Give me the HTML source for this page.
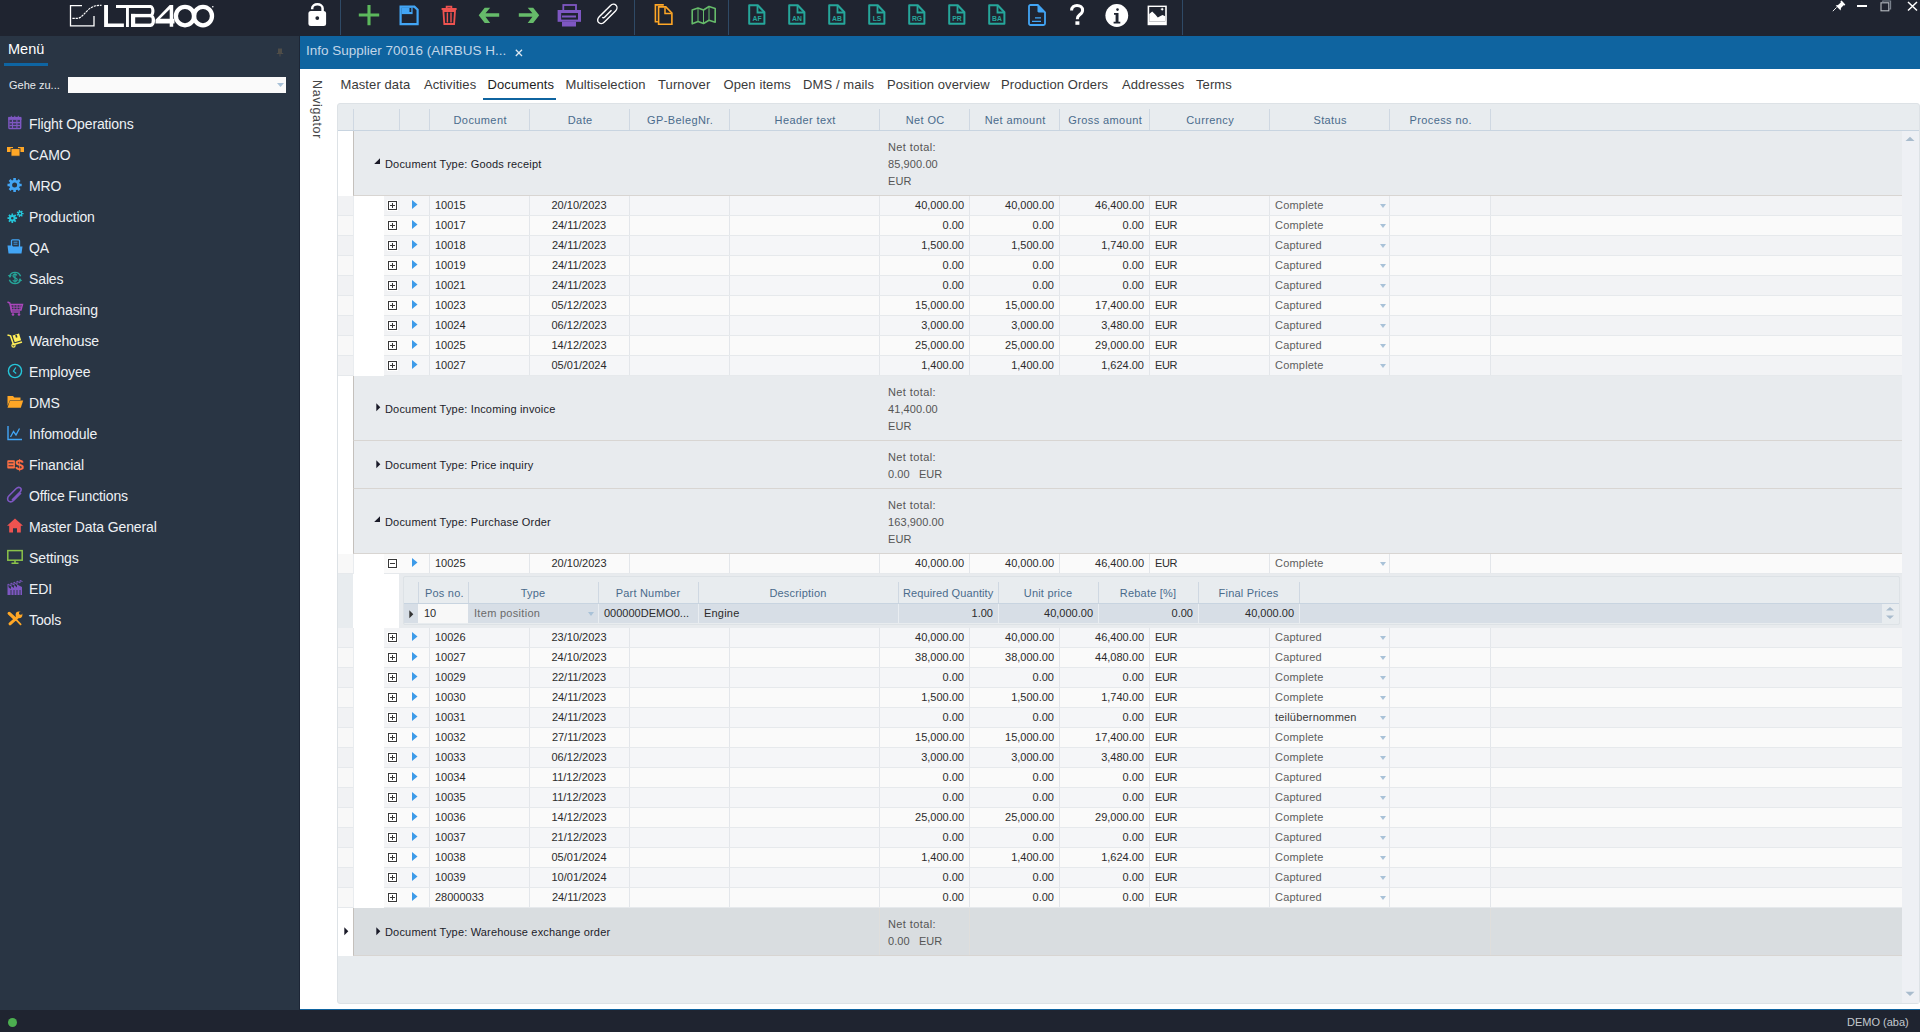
<!DOCTYPE html><html><head><meta charset="utf-8"><style>
*{box-sizing:border-box;margin:0;padding:0}
html,body{width:1920px;height:1032px;overflow:hidden;background:#fff;font-family:"Liberation Sans", sans-serif}
.a{position:absolute}
.t{position:absolute;white-space:nowrap;line-height:1}
svg{position:absolute;overflow:visible}
</style></head><body><div class="a" style="left:0;top:0;width:1920px;height:36px;background:#1f2430"></div>
<svg style="left:60px;top:0px" width="170" height="36" viewBox="0 0 170 36">
<path d="M22 5.6H10.5V25.9H34V16" fill="none" stroke="#fff" stroke-width="1.3"/>
<path d="M12.4 18.4H17C21 18.4 24 14 28 10C32 6.2 36 5.3 41.6 5.3" fill="none" stroke="#fff" stroke-width="1.1" stroke-dasharray="2.4 0.8"/>
<path d="M44.1 5H48V23.6H63.9V27H44.1Z" fill="#fff"/>
<path d="M56 5H91V8.1H68.9V27H66V8.1H56Z" fill="#fff"/><rect x="71" y="13.9" width="4.2" height="13.1" fill="#fff"/><rect x="71" y="13.9" width="20" height="3.4" fill="#fff"/><rect x="71" y="23.6" width="20" height="3.4" fill="#fff"/><path d="M90.5 6.55A2.4 4.5 0 0 1 90.5 15.6" fill="none" stroke="#fff" stroke-width="3.1"/><path d="M90.5 15.6A2.9 4.85 0 0 1 90.5 25.3" fill="none" stroke="#fff" stroke-width="3.4"/>
<path d="M109.7 4.9H113.2V18.8H114.5V23.5H113.2V26.8H109.7V23.5H95.5V19.8ZM109.7 9.2L100 18.8H109.7Z" fill="#fff" fill-rule="evenodd"/>
<ellipse cx="125" cy="16.1" rx="9.1" ry="9.2" fill="none" stroke="#fff" stroke-width="4.3"/>
<ellipse cx="143" cy="16.1" rx="9" ry="9.2" fill="none" stroke="#fff" stroke-width="4.3"/>
<circle cx="152.8" cy="6.7" r="0.8" fill="#fff"/>
</svg>
<div class="a" style="left:340px;top:0;width:1px;height:35px;background:#2f4a66"></div>
<div class="a" style="left:634px;top:0;width:1px;height:35px;background:#2f4a66"></div>
<div class="a" style="left:728px;top:0;width:1px;height:35px;background:#2f4a66"></div>
<div class="a" style="left:1182px;top:0;width:1px;height:35px;background:#2f4a66"></div>
<svg style="left:306px;top:0px" width="22" height="28" viewBox="0 0 22 28"><path d="M6.2 9.2V8.3A5.2 4.1 0 0 1 16.6 8.3V12" fill="none" stroke="#fff" stroke-width="2.5"/><rect x="2.4" y="11" width="17.7" height="15" rx="2.5" fill="#fff"/><circle cx="11.3" cy="18.1" r="1.9" fill="#1f2430"/></svg>
<svg style="left:358px;top:4px" width="22" height="22" viewBox="0 0 22 22"><path d="M11 1V21.2M0.8 11H21.2" stroke="#5cb85c" stroke-width="3.1"/></svg>
<svg style="left:399px;top:5px" width="21" height="21" viewBox="0 0 21 21"><path d="M1.6 1.6H15.4L18.6 4.8V19.2H1.6Z" fill="none" stroke="#42a5f5" stroke-width="2.2"/><rect x="2.6" y="2.5" width="11" height="6.6" fill="#42a5f5"/><rect x="10.5" y="3" width="1.8" height="4" fill="#1f2430"/></svg>
<svg style="left:440px;top:4px" width="18" height="22" viewBox="0 0 18 22"><path d="M1.6 5H16.6" stroke="#ef5350" stroke-width="2"/><path d="M6.6 4.5V2.6H11.4V4.5" fill="none" stroke="#ef5350" stroke-width="1.7"/><path d="M3.4 7H15L14.1 20H4.3Z" fill="none" stroke="#ef5350" stroke-width="1.8"/><path d="M7.4 8.5V18.5M11 8.5V18.5" stroke="#ef5350" stroke-width="1.4"/></svg>
<svg style="left:478px;top:7px" width="22" height="17" viewBox="0 0 22 17"><path d="M0.7 8.3L6.7 0.8H12.2L7.5 6.3H21.2V9.8H7.5L12.2 16H6.7Z" fill="#66bb6a"/></svg>
<svg style="left:518px;top:7px" width="22" height="17" viewBox="0 0 22 17"><path d="M21.2 8.3L15.2 0.8H9.7L14.4 6.3H0.8V9.8H14.4L9.7 16H15.2Z" fill="#66bb6a"/></svg>
<svg style="left:557px;top:3px" width="25" height="25" viewBox="0 0 25 25"><rect x="6.3" y="2" width="12.7" height="6" fill="none" stroke="#7e57c2" stroke-width="1.8"/><rect x="0.6" y="7" width="23.4" height="11.8" fill="#7e57c2"/><rect x="4.2" y="10" width="16.8" height="6.6" fill="#1f2430"/><rect x="5" y="12.5" width="14" height="2" fill="#7e57c2"/><rect x="5" y="18.8" width="14" height="4.7" fill="#7e57c2"/></svg>
<svg style="left:595px;top:3px" width="25" height="23" viewBox="0 0 25 23"><path d="M11.5 6.5L4.2 13.8C2.3 15.7 2.2 18.2 3.6 19.6C5 21 7.5 20.9 9.4 19L20.5 7.9C22.3 6.1 22.4 3.6 21 2.2C19.6 0.8 17.1 0.9 15.3 2.7L5.8 12.2M16.5 7.2L9.8 13.9C9 14.7 7.9 14.8 7.3 14.2" fill="none" stroke="#fff" stroke-width="1.4"/></svg>
<svg style="left:654px;top:3px" width="20" height="23" viewBox="0 0 20 23"><path d="M9.8 1.9H1.4V18.7H3.9" fill="none" stroke="#ffa726" stroke-width="1.6"/><path d="M4.6 3.9H11.8L17.9 10V21.2H4.6Z" fill="none" stroke="#ffa726" stroke-width="1.6"/><path d="M11 4.5V10.6H17.3" fill="none" stroke="#ffa726" stroke-width="1.5"/></svg>
<svg style="left:691px;top:5px" width="26" height="21" viewBox="0 0 26 21"><path d="M1.2 5L7 3L12.5 5L18 1.5L24.2 3.6V17.3L18 15.3L12.5 18.5L7 16.5L1.2 18.8Z" fill="none" stroke="#66bb6a" stroke-width="1.6" stroke-linejoin="round"/><path d="M7 3V16.5M12.5 5V18.5M18 1.5V15.3" stroke="#66bb6a" stroke-width="1"/></svg>
<svg style="left:748px;top:4px" width="18" height="21" viewBox="0 0 18 21"><path d="M1.2 1.2H9.8L16.4 8.2V19.8H1.2Z" fill="none" stroke="#26a69a" stroke-width="2" stroke-linejoin="round"/><path d="M9.5 1.5V8.5H16" fill="none" stroke="#26a69a" stroke-width="1.8"/><text x="9" y="17.2" font-family="Liberation Sans" font-weight="bold" font-size="6.8" fill="#26a69a" text-anchor="middle">AF</text></svg>
<svg style="left:788px;top:4px" width="18" height="21" viewBox="0 0 18 21"><path d="M1.2 1.2H9.8L16.4 8.2V19.8H1.2Z" fill="none" stroke="#26a69a" stroke-width="2" stroke-linejoin="round"/><path d="M9.5 1.5V8.5H16" fill="none" stroke="#26a69a" stroke-width="1.8"/><text x="9" y="17.2" font-family="Liberation Sans" font-weight="bold" font-size="6.8" fill="#26a69a" text-anchor="middle">AN</text></svg>
<svg style="left:828px;top:4px" width="18" height="21" viewBox="0 0 18 21"><path d="M1.2 1.2H9.8L16.4 8.2V19.8H1.2Z" fill="none" stroke="#26a69a" stroke-width="2" stroke-linejoin="round"/><path d="M9.5 1.5V8.5H16" fill="none" stroke="#26a69a" stroke-width="1.8"/><text x="9" y="17.2" font-family="Liberation Sans" font-weight="bold" font-size="6.8" fill="#26a69a" text-anchor="middle">AB</text></svg>
<svg style="left:868px;top:4px" width="18" height="21" viewBox="0 0 18 21"><path d="M1.2 1.2H9.8L16.4 8.2V19.8H1.2Z" fill="none" stroke="#26a69a" stroke-width="2" stroke-linejoin="round"/><path d="M9.5 1.5V8.5H16" fill="none" stroke="#26a69a" stroke-width="1.8"/><text x="9" y="17.2" font-family="Liberation Sans" font-weight="bold" font-size="6.8" fill="#26a69a" text-anchor="middle">LS</text></svg>
<svg style="left:908px;top:4px" width="18" height="21" viewBox="0 0 18 21"><path d="M1.2 1.2H9.8L16.4 8.2V19.8H1.2Z" fill="none" stroke="#26a69a" stroke-width="2" stroke-linejoin="round"/><path d="M9.5 1.5V8.5H16" fill="none" stroke="#26a69a" stroke-width="1.8"/><text x="9" y="17.2" font-family="Liberation Sans" font-weight="bold" font-size="6.8" fill="#26a69a" text-anchor="middle">RG</text></svg>
<svg style="left:948px;top:4px" width="18" height="21" viewBox="0 0 18 21"><path d="M1.2 1.2H9.8L16.4 8.2V19.8H1.2Z" fill="none" stroke="#26a69a" stroke-width="2" stroke-linejoin="round"/><path d="M9.5 1.5V8.5H16" fill="none" stroke="#26a69a" stroke-width="1.8"/><text x="9" y="17.2" font-family="Liberation Sans" font-weight="bold" font-size="6.8" fill="#26a69a" text-anchor="middle">PR</text></svg>
<svg style="left:988px;top:4px" width="18" height="21" viewBox="0 0 18 21"><path d="M1.2 1.2H9.8L16.4 8.2V19.8H1.2Z" fill="none" stroke="#26a69a" stroke-width="2" stroke-linejoin="round"/><path d="M9.5 1.5V8.5H16" fill="none" stroke="#26a69a" stroke-width="1.8"/><text x="9" y="17.2" font-family="Liberation Sans" font-weight="bold" font-size="6.8" fill="#26a69a" text-anchor="middle">BA</text></svg>
<svg style="left:1028px;top:4px" width="19" height="22" viewBox="0 0 19 22"><path d="M2.5 1H9.8L17 8.3V19.5C17 20.3 16.3 21 15.5 21H2.5C1.7 21 1 20.3 1 19.5V2.5C1 1.7 1.7 1 2.5 1Z" fill="none" stroke="#42a5f5" stroke-width="1.8"/><path d="M9.5 1V7.3C9.5 8 10 8.5 10.7 8.5H17Z" fill="#42a5f5"/><path d="M7 13.8H13M4 17.3H13" stroke="#42a5f5" stroke-width="1.2"/></svg>
<svg style="left:1069px;top:4px" width="17" height="22" viewBox="0 0 17 22"><path d="M2.6 6.5C2.6 3.2 5 1.5 8 1.5C11.2 1.5 13.6 3.3 13.6 6.3C13.6 9 11.8 10 10.2 11.2C9 12.1 8.4 13 8.4 14.6V15.3" fill="none" stroke="#fff" stroke-width="3"/><rect x="6.4" y="17.3" width="4" height="3.5" fill="#fff"/></svg>
<svg style="left:1105px;top:4px" width="24" height="24" viewBox="0 0 24 24"><circle cx="11.8" cy="11.5" r="11.4" fill="#fff"/><circle cx="12.5" cy="5.6" r="1.3" fill="#1f2430"/><path d="M9 9H13.5V17.8H15.3V19.6H8.6V17.8H10.6V10.8H9Z" fill="#1f2430"/></svg>
<svg style="left:1147px;top:5px" width="21" height="21" viewBox="0 0 21 21"><rect x="0.6" y="0.6" width="19.2" height="19.6" fill="#fff"/><rect x="2.2" y="2" width="16" height="14.5" fill="#1f2430"/><path d="M2.2 16.5V9L5.2 6.5L8.3 9.5L10.8 12.5L13.5 11L15.5 10L18.2 11.2V16.5Z" fill="#fff"/><circle cx="15.2" cy="4.2" r="1" fill="#fff"/><path d="M15.2 2.6V5.8M13.6 4.2H16.8" stroke="#fff" stroke-width="0.5"/></svg>
<svg style="left:1832px;top:0px" width="14" height="12" viewBox="0 0 14 12"><path d="M0.8 11.2L4.6 7.4" stroke="#fff" stroke-width="0.9"/><path d="M3.6 5.4L8.6 10.4L9 8L11.6 5.2L12.7 5.5L13.3 4.4L9.6 0.6L8.5 1.3L8.8 2.4L6 5Z" fill="#fff"/></svg>
<div class="a" style="left:1857px;top:5px;width:10px;height:2px;background:#fff"></div>
<svg style="left:1880px;top:0px" width="12" height="12" viewBox="0 0 12 12"><rect x="1" y="2.8" width="7.8" height="8" fill="none" stroke="#b8bcc2" stroke-width="1.1"/><path d="M2.8 2.8V1H10.6V9H8.8" fill="none" stroke="#7d8590" stroke-width="1.1"/></svg>
<svg style="left:1907px;top:1px" width="11" height="10" viewBox="0 0 11 10"><path d="M1 1L10 9.5M10 1L1 9.5" stroke="#fff" stroke-width="1.5"/></svg>
<div class="a" style="left:0;top:36px;width:300px;height:974px;background:#293544"></div>
<div class="a" style="left:299px;top:36px;width:1px;height:974px;background:#1d2636"></div>
<div class="t" style="left:8px;top:41.5px;font-size:14.5px;color:#fff">Menü</div>
<div class="a" style="left:4px;top:63px;width:44px;height:3px;background:#0e65a3"></div>
<svg style="left:276px;top:48px" width="8" height="10" viewBox="0 0 8 10"><path d="M2 0.5H6V5H7.2V6H4.5V8.5H3.5V6H0.8V5H2Z" fill="#4f4d48"/></svg>
<div class="t" style="left:9px;top:79.5px;font-size:11px;color:#e6e9ec">Gehe zu...</div>
<div class="a" style="left:68px;top:77px;width:218px;height:16px;background:#fafafa"></div>
<svg style="left:277px;top:83px" width="8" height="5" viewBox="0 0 8 5"><path d="M0 0H7L3.5 4Z" fill="#a9c2d8"/></svg>
<svg style="left:7px;top:115px" width="16" height="16" viewBox="0 0 16 16"><rect x="1.9" y="2.6" width="11.8" height="11" rx="0.8" fill="none" stroke="#7e57c2" stroke-width="1.4"/><rect x="1.2" y="1.9" width="13.2" height="3" fill="#7e57c2"/><path d="M5.5 4.8V13.2M9.9 4.8V13.2M2.5 7.6H13M2.5 10.5H13" stroke="#7e57c2" stroke-width="1.1"/><path d="M4.3 0.8V2.5M7.8 0.8V2.5M11.3 0.8V2.5" stroke="#7e57c2" stroke-width="1"/><rect x="2.6" y="5.2" width="10.4" height="7.8" fill="#7e57c2" fill-opacity="0.25"/></svg>
<div class="t" style="left:29px;top:116.8px;font-size:14px;letter-spacing:-0.12px;color:#eef1f4">Flight Operations</div>
<svg style="left:7px;top:146px" width="16" height="16" viewBox="0 0 16 16"><rect x="0" y="1" width="6" height="5" fill="#ffa726"/><rect x="11" y="1" width="6" height="5" fill="#ffa726"/><rect x="4" y="2.6" width="9" height="7.6" fill="#ffa726" stroke="#293544" stroke-width="0.9"/></svg>
<div class="t" style="left:29px;top:147.8px;font-size:14px;letter-spacing:-0.12px;color:#eef1f4">CAMO</div>
<svg style="left:7px;top:177px" width="16" height="16" viewBox="0 0 16 16"><circle cx="7.6" cy="8" r="3.90" fill="none" stroke="#42a5f5" stroke-width="2.80"/><path d="M11.90 8.00L14.70 8.00M10.64 11.04L12.62 13.02M7.60 12.30L7.60 15.10M4.56 11.04L2.58 13.02M3.30 8.00L0.50 8.00M4.56 4.96L2.58 2.98M7.60 3.70L7.60 0.90M10.64 4.96L12.62 2.98" stroke="#42a5f5" stroke-width="2.6"/></svg>
<div class="t" style="left:29px;top:178.8px;font-size:14px;letter-spacing:-0.12px;color:#eef1f4">MRO</div>
<svg style="left:7px;top:208px" width="16" height="16" viewBox="0 0 16 16"><circle cx="5.3" cy="10.2" r="2.30" fill="none" stroke="#26c6da" stroke-width="2.00"/><path d="M7.60 10.20L10.10 10.20M6.93 11.83L8.69 13.59M5.30 12.50L5.30 15.00M3.67 11.83L1.91 13.59M3.00 10.20L0.50 10.20M3.67 8.57L1.91 6.81M5.30 7.90L5.30 5.40M6.93 8.57L8.69 6.81" stroke="#26c6da" stroke-width="1.7"/><circle cx="13.1" cy="5.6" r="1.70" fill="none" stroke="#26c6da" stroke-width="1.40"/><path d="M14.50 5.60L16.60 5.60M13.97 6.69L15.28 8.34M12.79 6.96L12.32 9.01M11.84 6.21L9.95 7.12M11.84 4.99L9.95 4.08M12.79 4.24L12.32 2.19M13.97 4.51L15.28 2.86" stroke="#26c6da" stroke-width="1.4"/></svg>
<div class="t" style="left:29px;top:209.8px;font-size:14px;letter-spacing:-0.12px;color:#eef1f4">Production</div>
<svg style="left:7px;top:239px" width="16" height="16" viewBox="0 0 16 16"><rect x="4.5" y="0.8" width="8" height="8" rx="1" fill="none" stroke="#42a5f5" stroke-width="1.3"/><path d="M6.5 3.2H10.5M6.5 5.2H10.5" stroke="#42a5f5" stroke-width="0.9"/><path d="M0.5 6.5H5L6 7.5H15.5L14.5 14.5H1.5Z" fill="#42a5f5"/></svg>
<div class="t" style="left:29px;top:240.8px;font-size:14px;letter-spacing:-0.12px;color:#eef1f4">QA</div>
<svg style="left:7px;top:270px" width="16" height="16" viewBox="0 0 16 16"><path d="M2.4 6.2A6 6 0 0 1 13.6 6.2M13.6 9.8A6 6 0 0 1 2.4 9.8" fill="none" stroke="#26a69a" stroke-width="1.4"/><path d="M0.8 5L3 8L4.8 5.2Z M15.2 11L13 8L11.2 10.8Z" fill="#26a69a"/><path d="M10 5.3C9.5 4.6 8.8 4.4 8 4.4C6.8 4.4 6 5 6 6C6 8.2 10.2 7.2 10.2 9.6C10.2 10.6 9.3 11.3 8 11.3C7 11.3 6.2 10.9 5.8 10.2M8 3V12.8" fill="none" stroke="#26a69a" stroke-width="1.2"/></svg>
<div class="t" style="left:29px;top:271.8px;font-size:14px;letter-spacing:-0.12px;color:#eef1f4">Sales</div>
<svg style="left:7px;top:301px" width="16" height="16" viewBox="0 0 16 16"><path d="M0.5 1L2.8 2L4.6 11H13" fill="none" stroke="#ab47bc" stroke-width="1.4"/><path d="M3.5 3.5H15.5L14 9H4.5Z" fill="none" stroke="#ab47bc" stroke-width="1.4"/><path d="M7 3.5V9M10 3.5V9M13 3.5V9M4 6.2H15" stroke="#ab47bc" stroke-width="0.9"/><circle cx="6" cy="13.5" r="1.3" fill="#ab47bc"/><circle cx="12" cy="13.5" r="1.3" fill="#ab47bc"/></svg>
<div class="t" style="left:29px;top:302.8px;font-size:14px;letter-spacing:-0.12px;color:#eef1f4">Purchasing</div>
<svg style="left:7px;top:332px" width="16" height="16" viewBox="0 0 16 16"><path d="M0.5 3L3.5 3.8L6.5 12.5L15 10" fill="none" stroke="#ffee58" stroke-width="1.6"/><path d="M5.5 3.5L12 1.5L14.2 8.3L7.7 10.3Z" fill="#ffee58"/><path d="M8.2 3.2L9 5.7L10.5 5.2L9.7 2.7" fill="#293544"/><circle cx="6.5" cy="13.5" r="1.6" fill="none" stroke="#ffee58" stroke-width="1.2"/></svg>
<div class="t" style="left:29px;top:333.8px;font-size:14px;letter-spacing:-0.12px;color:#eef1f4">Warehouse</div>
<svg style="left:7px;top:363px" width="16" height="16" viewBox="0 0 16 16"><circle cx="8" cy="8" r="6.6" fill="none" stroke="#26c6da" stroke-width="1.4"/><path d="M8.8 4.5L6.5 8.2L9.2 10.5" fill="none" stroke="#26c6da" stroke-width="1.2"/></svg>
<div class="t" style="left:29px;top:364.8px;font-size:14px;letter-spacing:-0.12px;color:#eef1f4">Employee</div>
<svg style="left:7px;top:394px" width="16" height="16" viewBox="0 0 16 16"><path d="M0.5 12V2H6L7.3 3.4H13.5V6H3Z" fill="#ffa726"/><path d="M3 6.5H16.2L13.8 13.8H0.5Z" fill="#ffa726"/></svg>
<div class="t" style="left:29px;top:395.8px;font-size:14px;letter-spacing:-0.12px;color:#eef1f4">DMS</div>
<svg style="left:7px;top:425px" width="16" height="16" viewBox="0 0 16 16"><path d="M1 1V14.5H15" fill="none" stroke="#42a5f5" stroke-width="1.4"/><path d="M3.5 12L6.5 6.5L9 10L12.5 3.5" fill="none" stroke="#42a5f5" stroke-width="1.3"/></svg>
<div class="t" style="left:29px;top:426.8px;font-size:14px;letter-spacing:-0.12px;color:#eef1f4">Infomodule</div>
<svg style="left:7px;top:456px" width="16" height="16" viewBox="0 0 16 16"><rect x="0.3" y="4.3" width="7.6" height="8.2" rx="0.8" fill="#ff7043"/><path d="M1.5 6.8H6.5M1.5 9.8H6.5" stroke="#293544" stroke-width="1"/><text x="12.2" y="13.8" font-family="Liberation Sans" font-weight="bold" font-size="15.5" fill="#ff7043" text-anchor="middle">$</text></svg>
<div class="t" style="left:29px;top:457.8px;font-size:14px;letter-spacing:-0.12px;color:#eef1f4">Financial</div>
<svg style="left:7px;top:487px" width="16" height="16" viewBox="0 0 16 16"><path d="M5 13L13 5C14.5 3.5 14.5 1.8 13.3 0.9C12 0 10.5 0.3 9 1.8L2 8.8C0.3 10.5 0.2 12.8 1.5 14C2.8 15.2 5 15 6.8 13.2L14 6" fill="none" stroke="#7e57c2" stroke-width="1.6"/></svg>
<div class="t" style="left:29px;top:488.8px;font-size:14px;letter-spacing:-0.12px;color:#eef1f4">Office Functions</div>
<svg style="left:7px;top:518px" width="16" height="16" viewBox="0 0 16 16"><path d="M8 0.5L16 7.8H13.8V14.5H10V10.2H6V14.5H2.2V7.8H0Z" fill="#ef5350"/></svg>
<div class="t" style="left:29px;top:519.8px;font-size:14px;letter-spacing:-0.12px;color:#eef1f4">Master Data General</div>
<svg style="left:7px;top:549px" width="16" height="16" viewBox="0 0 16 16"><rect x="0.8" y="1.6" width="14.4" height="9.6" fill="none" stroke="#8bc34a" stroke-width="1.5"/><path d="M4.5 14.2H11.5M8 11.2V14.2" stroke="#8bc34a" stroke-width="1.6"/></svg>
<div class="t" style="left:29px;top:550.8px;font-size:14px;letter-spacing:-0.12px;color:#eef1f4">Settings</div>
<svg style="left:7px;top:580px" width="16" height="16" viewBox="0 0 16 16"><path d="M1 15V4L4 6V3L7 5V2L10 4.5V1L13 3V0.5L15.5 1.5" fill="none" stroke="#7e57c2" stroke-width="1"/><path d="M1 7L4 9V6L7 8V5L10 7.5V4.5L15 7V15H1Z" fill="#7e57c2"/><path d="M4 10V15M7 10V15M10 10V15M13 10V15" stroke="#293544" stroke-width="0.9"/></svg>
<div class="t" style="left:29px;top:581.8px;font-size:14px;letter-spacing:-0.12px;color:#eef1f4">EDI</div>
<svg style="left:7px;top:611px" width="16" height="16" viewBox="0 0 16 16"><path d="M2.2 2.4L8.6 8.2" stroke="#ffa726" stroke-width="3.3" stroke-linecap="round"/><path d="M8.6 8.2L13.6 13.3" stroke="#ffa726" stroke-width="1.8" stroke-linecap="round"/><path d="M10.5 6.2L3 12.8" stroke="#ffa726" stroke-width="3" stroke-linecap="round"/><circle cx="12" cy="3.8" r="3.4" fill="#ffa726"/><circle cx="13.6" cy="2.2" r="1.6" fill="#293544"/></svg>
<div class="t" style="left:29px;top:612.8px;font-size:14px;letter-spacing:-0.12px;color:#eef1f4">Tools</div>
<div class="a" style="left:300px;top:36px;width:1620px;height:33px;background:#0f64a0"></div>
<div class="t" style="left:306px;top:44px;font-size:13.5px;color:#c2d6e8">Info Supplier 70016 (AIRBUS H...</div>
<svg style="left:515px;top:49px" width="8" height="8" viewBox="0 0 8 8"><path d="M0.8 0.8L7 7M7 0.8L0.8 7" stroke="#dde7f0" stroke-width="1.3"/></svg>
<div class="a" style="left:300px;top:69px;width:1620px;height:940px;background:#fff"></div>
<div class="a" style="left:300px;top:1009px;width:1620px;height:1px;background:#0f64a0"></div>
<div class="a" style="left:0;top:1010px;width:1920px;height:22px;background:#1f2430"></div>
<div class="a" style="left:7.5px;top:1018px;width:9px;height:9px;border-radius:50%;background:#4caf50"></div>
<div class="t" style="left:1847px;top:1016.5px;font-size:11px;color:#c4c9cf">DEMO (aba)</div>
<div class="t" style="left:323px;top:80.3px;font-size:12.5px;letter-spacing:0.6px;color:#474747;transform-origin:0 0;transform:rotate(90deg)">Navigator</div>
<div class="t" style="left:340.5px;top:78px;font-size:13px;letter-spacing:0.1px;color:#3a3a3a">Master data</div>
<div class="t" style="left:424px;top:78px;font-size:13px;letter-spacing:0.1px;color:#3a3a3a">Activities</div>
<div class="t" style="left:487.5px;top:78px;font-size:13px;letter-spacing:0.1px;color:#1c1c1c">Documents</div>
<div class="t" style="left:565.5px;top:78px;font-size:13px;letter-spacing:0.1px;color:#3a3a3a">Multiselection</div>
<div class="t" style="left:658px;top:78px;font-size:13px;letter-spacing:0.1px;color:#3a3a3a">Turnover</div>
<div class="t" style="left:723.5px;top:78px;font-size:13px;letter-spacing:0.1px;color:#3a3a3a">Open items</div>
<div class="t" style="left:803px;top:78px;font-size:13px;letter-spacing:0.1px;color:#3a3a3a">DMS / mails</div>
<div class="t" style="left:887px;top:78px;font-size:13px;letter-spacing:0.1px;color:#3a3a3a">Position overview</div>
<div class="t" style="left:1001px;top:78px;font-size:13px;letter-spacing:0.1px;color:#3a3a3a">Production Orders</div>
<div class="t" style="left:1122px;top:78px;font-size:13px;letter-spacing:0.1px;color:#3a3a3a">Addresses</div>
<div class="t" style="left:1196px;top:78px;font-size:13px;letter-spacing:0.1px;color:#3a3a3a">Terms</div>
<div class="a" style="left:483px;top:98px;width:73px;height:2px;background:#0f64a0"></div>
<div class="a" style="left:337px;top:103px;width:1583px;height:901px;background:#e8ecef;border:1px solid #dde2e6;border-radius:3px"></div>
<div class="a" style="left:353px;top:109px;width:1px;height:21px;background:#cfd8e2"></div>
<div class="a" style="left:399px;top:109px;width:1px;height:21px;background:#cfd8e2"></div>
<div class="a" style="left:429px;top:109px;width:1px;height:21px;background:#cfd8e2"></div>
<div class="a" style="left:529px;top:109px;width:1px;height:21px;background:#cfd8e2"></div>
<div class="a" style="left:629px;top:109px;width:1px;height:21px;background:#cfd8e2"></div>
<div class="a" style="left:729px;top:109px;width:1px;height:21px;background:#cfd8e2"></div>
<div class="a" style="left:879px;top:109px;width:1px;height:21px;background:#cfd8e2"></div>
<div class="a" style="left:969px;top:109px;width:1px;height:21px;background:#cfd8e2"></div>
<div class="a" style="left:1059px;top:109px;width:1px;height:21px;background:#cfd8e2"></div>
<div class="a" style="left:1149px;top:109px;width:1px;height:21px;background:#cfd8e2"></div>
<div class="a" style="left:1269px;top:109px;width:1px;height:21px;background:#cfd8e2"></div>
<div class="a" style="left:1389px;top:109px;width:1px;height:21px;background:#cfd8e2"></div>
<div class="a" style="left:1490px;top:109px;width:1px;height:21px;background:#cfd8e2"></div>
<div class="a" style="left:338px;top:130px;width:1581px;height:1px;background:#c8d4e0"></div>
<div class="t" style="left:430.2px;width:100px;top:115px;font-size:11px;letter-spacing:0.4px;color:#4a6b8c;text-align:center">Document</div>
<div class="t" style="left:530.2px;width:100px;top:115px;font-size:11px;letter-spacing:0.4px;color:#4a6b8c;text-align:center">Date</div>
<div class="t" style="left:630.2px;width:100px;top:115px;font-size:11px;letter-spacing:0.4px;color:#4a6b8c;text-align:center">GP-BelegNr.</div>
<div class="t" style="left:730.2px;width:150px;top:115px;font-size:11px;letter-spacing:0.4px;color:#4a6b8c;text-align:center">Header text</div>
<div class="t" style="left:880.2px;width:90px;top:115px;font-size:11px;letter-spacing:0.4px;color:#4a6b8c;text-align:center">Net OC</div>
<div class="t" style="left:970.2px;width:90px;top:115px;font-size:11px;letter-spacing:0.4px;color:#4a6b8c;text-align:center">Net amount</div>
<div class="t" style="left:1060.2px;width:90px;top:115px;font-size:11px;letter-spacing:0.4px;color:#4a6b8c;text-align:center">Gross amount</div>
<div class="t" style="left:1150.2px;width:120px;top:115px;font-size:11px;letter-spacing:0.4px;color:#4a6b8c;text-align:center">Currency</div>
<div class="t" style="left:1270.2px;width:120px;top:115px;font-size:11px;letter-spacing:0.4px;color:#4a6b8c;text-align:center">Status</div>
<div class="t" style="left:1390.2px;width:101px;top:115px;font-size:11px;letter-spacing:0.4px;color:#4a6b8c;text-align:center">Process no.</div>
<div class="a" style="left:1902px;top:131px;width:17px;height:872px;background:#eef0f4"></div>
<svg style="left:1905px;top:136px" width="10" height="6" viewBox="0 0 10 6"><path d="M0.5 5L5 0.8L9.5 5Z" fill="#a9bccd"/></svg>
<svg style="left:1905px;top:991px" width="10" height="6" viewBox="0 0 10 6"><path d="M0.5 0.8L5 5L9.5 0.8Z" fill="#a9bccd"/></svg>
<div class="a" style="left:338px;top:131px;width:15px;height:65px;background:#fff"></div>
<div class="a" style="left:353px;top:131px;width:1549px;height:65px;background:#e8ebee;border-left:1px solid #c4c0bc;border-bottom:1px solid #d8d5d2"></div>
<svg style="left:374px;top:158px" width="7" height="7" viewBox="0 0 7 7"><path d="M6 0.2V6H0.2Z" fill="#1a1a28"/></svg>
<div class="t" style="left:385px;top:158.8px;font-size:11px;letter-spacing:0.18px;color:#1c1c2a">Document Type: Goods receipt</div>
<div class="t" style="left:888px;top:141.7px;font-size:11px;letter-spacing:0.4px;color:#555">Net total:</div>
<div class="t" style="left:888px;top:158.7px;font-size:11px;letter-spacing:0.1px;color:#555">85,900.00</div>
<div class="t" style="left:888px;top:175.7px;font-size:11px;letter-spacing:0.1px;color:#555">EUR</div>
<div class="a" style="left:338px;top:196px;width:15px;height:19px;background:#f1f2f4"></div>
<div class="a" style="left:353px;top:196px;width:1px;height:20px;background:#e9ecef"></div>
<div class="a" style="left:338px;top:215px;width:15px;height:1px;background:#e6e9ec"></div>
<div class="a" style="left:354px;top:196px;width:30px;height:20px;background:#fff"></div>
<div class="a" style="left:384px;top:196px;width:1518px;height:20px;background:#f2f3f5;border-bottom:1px solid #e6e9ec"></div>
<div class="a" style="left:400px;top:196px;width:1090px;height:19px;background:#f5f6f8"></div>
<div class="a" style="left:429px;top:196px;width:1px;height:19px;background:#e3e6ea"></div>
<div class="a" style="left:529px;top:196px;width:1px;height:19px;background:#e3e6ea"></div>
<div class="a" style="left:629px;top:196px;width:1px;height:19px;background:#e3e6ea"></div>
<div class="a" style="left:729px;top:196px;width:1px;height:19px;background:#e3e6ea"></div>
<div class="a" style="left:879px;top:196px;width:1px;height:19px;background:#e3e6ea"></div>
<div class="a" style="left:969px;top:196px;width:1px;height:19px;background:#e3e6ea"></div>
<div class="a" style="left:1059px;top:196px;width:1px;height:19px;background:#e3e6ea"></div>
<div class="a" style="left:1149px;top:196px;width:1px;height:19px;background:#e3e6ea"></div>
<div class="a" style="left:1269px;top:196px;width:1px;height:19px;background:#e3e6ea"></div>
<div class="a" style="left:1389px;top:196px;width:1px;height:19px;background:#e3e6ea"></div>
<div class="a" style="left:1490px;top:196px;width:1px;height:19px;background:#e3e6ea"></div>
<div class="a" style="left:388px;top:201px;width:9px;height:9px;border:1px solid #383838;background:#fff;box-shadow:0 0 0 1px #fff"></div>
<div class="a" style="left:390px;top:205px;width:5px;height:1px;background:#383838"></div>
<div class="a" style="left:392px;top:203px;width:1px;height:5px;background:#383838"></div>
<svg style="left:411px;top:200px" width="7" height="10" viewBox="0 0 7 10"><path d="M1 0L6.5 4.5L1 9Z" fill="#3d9be9"/></svg>
<div class="t" style="left:435px;top:200px;font-size:11px;color:#2b2b2b">10015</div>
<div class="t" style="left:529px;width:100px;text-align:center;top:200px;font-size:11px;color:#2b2b2b">20/10/2023</div>
<div class="t" style="left:864px;width:100px;text-align:right;top:200px;font-size:11px;color:#2b2b2b">40,000.00</div>
<div class="t" style="left:954px;width:100px;text-align:right;top:200px;font-size:11px;color:#2b2b2b">40,000.00</div>
<div class="t" style="left:1044px;width:100px;text-align:right;top:200px;font-size:11px;color:#2b2b2b">46,400.00</div>
<div class="t" style="left:1155px;top:200px;font-size:11px;letter-spacing:-0.4px;color:#2b2b2b">EUR</div>
<div class="t" style="left:1275px;top:200px;font-size:11px;letter-spacing:0.2px;color:#5e5e5e">Complete</div>
<svg style="left:1380px;top:204px" width="6" height="4" viewBox="0 0 6 4"><path d="M0 0H6L3 4Z" fill="#a9c2d8"/></svg>
<div class="a" style="left:338px;top:216px;width:15px;height:19px;background:#f8f8f8"></div>
<div class="a" style="left:353px;top:216px;width:1px;height:20px;background:#e9ecef"></div>
<div class="a" style="left:338px;top:235px;width:15px;height:1px;background:#e6e9ec"></div>
<div class="a" style="left:354px;top:216px;width:30px;height:20px;background:#fff"></div>
<div class="a" style="left:384px;top:216px;width:1518px;height:20px;background:#fafafa;border-bottom:1px solid #e6e9ec"></div>
<div class="a" style="left:400px;top:216px;width:1090px;height:19px;background:#fafafa"></div>
<div class="a" style="left:429px;top:216px;width:1px;height:19px;background:#e3e6ea"></div>
<div class="a" style="left:529px;top:216px;width:1px;height:19px;background:#e3e6ea"></div>
<div class="a" style="left:629px;top:216px;width:1px;height:19px;background:#e3e6ea"></div>
<div class="a" style="left:729px;top:216px;width:1px;height:19px;background:#e3e6ea"></div>
<div class="a" style="left:879px;top:216px;width:1px;height:19px;background:#e3e6ea"></div>
<div class="a" style="left:969px;top:216px;width:1px;height:19px;background:#e3e6ea"></div>
<div class="a" style="left:1059px;top:216px;width:1px;height:19px;background:#e3e6ea"></div>
<div class="a" style="left:1149px;top:216px;width:1px;height:19px;background:#e3e6ea"></div>
<div class="a" style="left:1269px;top:216px;width:1px;height:19px;background:#e3e6ea"></div>
<div class="a" style="left:1389px;top:216px;width:1px;height:19px;background:#e3e6ea"></div>
<div class="a" style="left:1490px;top:216px;width:1px;height:19px;background:#e3e6ea"></div>
<div class="a" style="left:388px;top:221px;width:9px;height:9px;border:1px solid #383838;background:#fff;box-shadow:0 0 0 1px #fff"></div>
<div class="a" style="left:390px;top:225px;width:5px;height:1px;background:#383838"></div>
<div class="a" style="left:392px;top:223px;width:1px;height:5px;background:#383838"></div>
<svg style="left:411px;top:220px" width="7" height="10" viewBox="0 0 7 10"><path d="M1 0L6.5 4.5L1 9Z" fill="#3d9be9"/></svg>
<div class="t" style="left:435px;top:220px;font-size:11px;color:#2b2b2b">10017</div>
<div class="t" style="left:529px;width:100px;text-align:center;top:220px;font-size:11px;color:#2b2b2b">24/11/2023</div>
<div class="t" style="left:864px;width:100px;text-align:right;top:220px;font-size:11px;color:#2b2b2b">0.00</div>
<div class="t" style="left:954px;width:100px;text-align:right;top:220px;font-size:11px;color:#2b2b2b">0.00</div>
<div class="t" style="left:1044px;width:100px;text-align:right;top:220px;font-size:11px;color:#2b2b2b">0.00</div>
<div class="t" style="left:1155px;top:220px;font-size:11px;letter-spacing:-0.4px;color:#2b2b2b">EUR</div>
<div class="t" style="left:1275px;top:220px;font-size:11px;letter-spacing:0.2px;color:#5e5e5e">Complete</div>
<svg style="left:1380px;top:224px" width="6" height="4" viewBox="0 0 6 4"><path d="M0 0H6L3 4Z" fill="#a9c2d8"/></svg>
<div class="a" style="left:338px;top:236px;width:15px;height:19px;background:#f1f2f4"></div>
<div class="a" style="left:353px;top:236px;width:1px;height:20px;background:#e9ecef"></div>
<div class="a" style="left:338px;top:255px;width:15px;height:1px;background:#e6e9ec"></div>
<div class="a" style="left:354px;top:236px;width:30px;height:20px;background:#fff"></div>
<div class="a" style="left:384px;top:236px;width:1518px;height:20px;background:#f2f3f5;border-bottom:1px solid #e6e9ec"></div>
<div class="a" style="left:400px;top:236px;width:1090px;height:19px;background:#f5f6f8"></div>
<div class="a" style="left:429px;top:236px;width:1px;height:19px;background:#e3e6ea"></div>
<div class="a" style="left:529px;top:236px;width:1px;height:19px;background:#e3e6ea"></div>
<div class="a" style="left:629px;top:236px;width:1px;height:19px;background:#e3e6ea"></div>
<div class="a" style="left:729px;top:236px;width:1px;height:19px;background:#e3e6ea"></div>
<div class="a" style="left:879px;top:236px;width:1px;height:19px;background:#e3e6ea"></div>
<div class="a" style="left:969px;top:236px;width:1px;height:19px;background:#e3e6ea"></div>
<div class="a" style="left:1059px;top:236px;width:1px;height:19px;background:#e3e6ea"></div>
<div class="a" style="left:1149px;top:236px;width:1px;height:19px;background:#e3e6ea"></div>
<div class="a" style="left:1269px;top:236px;width:1px;height:19px;background:#e3e6ea"></div>
<div class="a" style="left:1389px;top:236px;width:1px;height:19px;background:#e3e6ea"></div>
<div class="a" style="left:1490px;top:236px;width:1px;height:19px;background:#e3e6ea"></div>
<div class="a" style="left:388px;top:241px;width:9px;height:9px;border:1px solid #383838;background:#fff;box-shadow:0 0 0 1px #fff"></div>
<div class="a" style="left:390px;top:245px;width:5px;height:1px;background:#383838"></div>
<div class="a" style="left:392px;top:243px;width:1px;height:5px;background:#383838"></div>
<svg style="left:411px;top:240px" width="7" height="10" viewBox="0 0 7 10"><path d="M1 0L6.5 4.5L1 9Z" fill="#3d9be9"/></svg>
<div class="t" style="left:435px;top:240px;font-size:11px;color:#2b2b2b">10018</div>
<div class="t" style="left:529px;width:100px;text-align:center;top:240px;font-size:11px;color:#2b2b2b">24/11/2023</div>
<div class="t" style="left:864px;width:100px;text-align:right;top:240px;font-size:11px;color:#2b2b2b">1,500.00</div>
<div class="t" style="left:954px;width:100px;text-align:right;top:240px;font-size:11px;color:#2b2b2b">1,500.00</div>
<div class="t" style="left:1044px;width:100px;text-align:right;top:240px;font-size:11px;color:#2b2b2b">1,740.00</div>
<div class="t" style="left:1155px;top:240px;font-size:11px;letter-spacing:-0.4px;color:#2b2b2b">EUR</div>
<div class="t" style="left:1275px;top:240px;font-size:11px;letter-spacing:0.2px;color:#5e5e5e">Captured</div>
<svg style="left:1380px;top:244px" width="6" height="4" viewBox="0 0 6 4"><path d="M0 0H6L3 4Z" fill="#a9c2d8"/></svg>
<div class="a" style="left:338px;top:256px;width:15px;height:19px;background:#f8f8f8"></div>
<div class="a" style="left:353px;top:256px;width:1px;height:20px;background:#e9ecef"></div>
<div class="a" style="left:338px;top:275px;width:15px;height:1px;background:#e6e9ec"></div>
<div class="a" style="left:354px;top:256px;width:30px;height:20px;background:#fff"></div>
<div class="a" style="left:384px;top:256px;width:1518px;height:20px;background:#fafafa;border-bottom:1px solid #e6e9ec"></div>
<div class="a" style="left:400px;top:256px;width:1090px;height:19px;background:#fafafa"></div>
<div class="a" style="left:429px;top:256px;width:1px;height:19px;background:#e3e6ea"></div>
<div class="a" style="left:529px;top:256px;width:1px;height:19px;background:#e3e6ea"></div>
<div class="a" style="left:629px;top:256px;width:1px;height:19px;background:#e3e6ea"></div>
<div class="a" style="left:729px;top:256px;width:1px;height:19px;background:#e3e6ea"></div>
<div class="a" style="left:879px;top:256px;width:1px;height:19px;background:#e3e6ea"></div>
<div class="a" style="left:969px;top:256px;width:1px;height:19px;background:#e3e6ea"></div>
<div class="a" style="left:1059px;top:256px;width:1px;height:19px;background:#e3e6ea"></div>
<div class="a" style="left:1149px;top:256px;width:1px;height:19px;background:#e3e6ea"></div>
<div class="a" style="left:1269px;top:256px;width:1px;height:19px;background:#e3e6ea"></div>
<div class="a" style="left:1389px;top:256px;width:1px;height:19px;background:#e3e6ea"></div>
<div class="a" style="left:1490px;top:256px;width:1px;height:19px;background:#e3e6ea"></div>
<div class="a" style="left:388px;top:261px;width:9px;height:9px;border:1px solid #383838;background:#fff;box-shadow:0 0 0 1px #fff"></div>
<div class="a" style="left:390px;top:265px;width:5px;height:1px;background:#383838"></div>
<div class="a" style="left:392px;top:263px;width:1px;height:5px;background:#383838"></div>
<svg style="left:411px;top:260px" width="7" height="10" viewBox="0 0 7 10"><path d="M1 0L6.5 4.5L1 9Z" fill="#3d9be9"/></svg>
<div class="t" style="left:435px;top:260px;font-size:11px;color:#2b2b2b">10019</div>
<div class="t" style="left:529px;width:100px;text-align:center;top:260px;font-size:11px;color:#2b2b2b">24/11/2023</div>
<div class="t" style="left:864px;width:100px;text-align:right;top:260px;font-size:11px;color:#2b2b2b">0.00</div>
<div class="t" style="left:954px;width:100px;text-align:right;top:260px;font-size:11px;color:#2b2b2b">0.00</div>
<div class="t" style="left:1044px;width:100px;text-align:right;top:260px;font-size:11px;color:#2b2b2b">0.00</div>
<div class="t" style="left:1155px;top:260px;font-size:11px;letter-spacing:-0.4px;color:#2b2b2b">EUR</div>
<div class="t" style="left:1275px;top:260px;font-size:11px;letter-spacing:0.2px;color:#5e5e5e">Captured</div>
<svg style="left:1380px;top:264px" width="6" height="4" viewBox="0 0 6 4"><path d="M0 0H6L3 4Z" fill="#a9c2d8"/></svg>
<div class="a" style="left:338px;top:276px;width:15px;height:19px;background:#f1f2f4"></div>
<div class="a" style="left:353px;top:276px;width:1px;height:20px;background:#e9ecef"></div>
<div class="a" style="left:338px;top:295px;width:15px;height:1px;background:#e6e9ec"></div>
<div class="a" style="left:354px;top:276px;width:30px;height:20px;background:#fff"></div>
<div class="a" style="left:384px;top:276px;width:1518px;height:20px;background:#f2f3f5;border-bottom:1px solid #e6e9ec"></div>
<div class="a" style="left:400px;top:276px;width:1090px;height:19px;background:#f5f6f8"></div>
<div class="a" style="left:429px;top:276px;width:1px;height:19px;background:#e3e6ea"></div>
<div class="a" style="left:529px;top:276px;width:1px;height:19px;background:#e3e6ea"></div>
<div class="a" style="left:629px;top:276px;width:1px;height:19px;background:#e3e6ea"></div>
<div class="a" style="left:729px;top:276px;width:1px;height:19px;background:#e3e6ea"></div>
<div class="a" style="left:879px;top:276px;width:1px;height:19px;background:#e3e6ea"></div>
<div class="a" style="left:969px;top:276px;width:1px;height:19px;background:#e3e6ea"></div>
<div class="a" style="left:1059px;top:276px;width:1px;height:19px;background:#e3e6ea"></div>
<div class="a" style="left:1149px;top:276px;width:1px;height:19px;background:#e3e6ea"></div>
<div class="a" style="left:1269px;top:276px;width:1px;height:19px;background:#e3e6ea"></div>
<div class="a" style="left:1389px;top:276px;width:1px;height:19px;background:#e3e6ea"></div>
<div class="a" style="left:1490px;top:276px;width:1px;height:19px;background:#e3e6ea"></div>
<div class="a" style="left:388px;top:281px;width:9px;height:9px;border:1px solid #383838;background:#fff;box-shadow:0 0 0 1px #fff"></div>
<div class="a" style="left:390px;top:285px;width:5px;height:1px;background:#383838"></div>
<div class="a" style="left:392px;top:283px;width:1px;height:5px;background:#383838"></div>
<svg style="left:411px;top:280px" width="7" height="10" viewBox="0 0 7 10"><path d="M1 0L6.5 4.5L1 9Z" fill="#3d9be9"/></svg>
<div class="t" style="left:435px;top:280px;font-size:11px;color:#2b2b2b">10021</div>
<div class="t" style="left:529px;width:100px;text-align:center;top:280px;font-size:11px;color:#2b2b2b">24/11/2023</div>
<div class="t" style="left:864px;width:100px;text-align:right;top:280px;font-size:11px;color:#2b2b2b">0.00</div>
<div class="t" style="left:954px;width:100px;text-align:right;top:280px;font-size:11px;color:#2b2b2b">0.00</div>
<div class="t" style="left:1044px;width:100px;text-align:right;top:280px;font-size:11px;color:#2b2b2b">0.00</div>
<div class="t" style="left:1155px;top:280px;font-size:11px;letter-spacing:-0.4px;color:#2b2b2b">EUR</div>
<div class="t" style="left:1275px;top:280px;font-size:11px;letter-spacing:0.2px;color:#5e5e5e">Captured</div>
<svg style="left:1380px;top:284px" width="6" height="4" viewBox="0 0 6 4"><path d="M0 0H6L3 4Z" fill="#a9c2d8"/></svg>
<div class="a" style="left:338px;top:296px;width:15px;height:19px;background:#f8f8f8"></div>
<div class="a" style="left:353px;top:296px;width:1px;height:20px;background:#e9ecef"></div>
<div class="a" style="left:338px;top:315px;width:15px;height:1px;background:#e6e9ec"></div>
<div class="a" style="left:354px;top:296px;width:30px;height:20px;background:#fff"></div>
<div class="a" style="left:384px;top:296px;width:1518px;height:20px;background:#fafafa;border-bottom:1px solid #e6e9ec"></div>
<div class="a" style="left:400px;top:296px;width:1090px;height:19px;background:#fafafa"></div>
<div class="a" style="left:429px;top:296px;width:1px;height:19px;background:#e3e6ea"></div>
<div class="a" style="left:529px;top:296px;width:1px;height:19px;background:#e3e6ea"></div>
<div class="a" style="left:629px;top:296px;width:1px;height:19px;background:#e3e6ea"></div>
<div class="a" style="left:729px;top:296px;width:1px;height:19px;background:#e3e6ea"></div>
<div class="a" style="left:879px;top:296px;width:1px;height:19px;background:#e3e6ea"></div>
<div class="a" style="left:969px;top:296px;width:1px;height:19px;background:#e3e6ea"></div>
<div class="a" style="left:1059px;top:296px;width:1px;height:19px;background:#e3e6ea"></div>
<div class="a" style="left:1149px;top:296px;width:1px;height:19px;background:#e3e6ea"></div>
<div class="a" style="left:1269px;top:296px;width:1px;height:19px;background:#e3e6ea"></div>
<div class="a" style="left:1389px;top:296px;width:1px;height:19px;background:#e3e6ea"></div>
<div class="a" style="left:1490px;top:296px;width:1px;height:19px;background:#e3e6ea"></div>
<div class="a" style="left:388px;top:301px;width:9px;height:9px;border:1px solid #383838;background:#fff;box-shadow:0 0 0 1px #fff"></div>
<div class="a" style="left:390px;top:305px;width:5px;height:1px;background:#383838"></div>
<div class="a" style="left:392px;top:303px;width:1px;height:5px;background:#383838"></div>
<svg style="left:411px;top:300px" width="7" height="10" viewBox="0 0 7 10"><path d="M1 0L6.5 4.5L1 9Z" fill="#3d9be9"/></svg>
<div class="t" style="left:435px;top:300px;font-size:11px;color:#2b2b2b">10023</div>
<div class="t" style="left:529px;width:100px;text-align:center;top:300px;font-size:11px;color:#2b2b2b">05/12/2023</div>
<div class="t" style="left:864px;width:100px;text-align:right;top:300px;font-size:11px;color:#2b2b2b">15,000.00</div>
<div class="t" style="left:954px;width:100px;text-align:right;top:300px;font-size:11px;color:#2b2b2b">15,000.00</div>
<div class="t" style="left:1044px;width:100px;text-align:right;top:300px;font-size:11px;color:#2b2b2b">17,400.00</div>
<div class="t" style="left:1155px;top:300px;font-size:11px;letter-spacing:-0.4px;color:#2b2b2b">EUR</div>
<div class="t" style="left:1275px;top:300px;font-size:11px;letter-spacing:0.2px;color:#5e5e5e">Captured</div>
<svg style="left:1380px;top:304px" width="6" height="4" viewBox="0 0 6 4"><path d="M0 0H6L3 4Z" fill="#a9c2d8"/></svg>
<div class="a" style="left:338px;top:316px;width:15px;height:19px;background:#f1f2f4"></div>
<div class="a" style="left:353px;top:316px;width:1px;height:20px;background:#e9ecef"></div>
<div class="a" style="left:338px;top:335px;width:15px;height:1px;background:#e6e9ec"></div>
<div class="a" style="left:354px;top:316px;width:30px;height:20px;background:#fff"></div>
<div class="a" style="left:384px;top:316px;width:1518px;height:20px;background:#f2f3f5;border-bottom:1px solid #e6e9ec"></div>
<div class="a" style="left:400px;top:316px;width:1090px;height:19px;background:#f5f6f8"></div>
<div class="a" style="left:429px;top:316px;width:1px;height:19px;background:#e3e6ea"></div>
<div class="a" style="left:529px;top:316px;width:1px;height:19px;background:#e3e6ea"></div>
<div class="a" style="left:629px;top:316px;width:1px;height:19px;background:#e3e6ea"></div>
<div class="a" style="left:729px;top:316px;width:1px;height:19px;background:#e3e6ea"></div>
<div class="a" style="left:879px;top:316px;width:1px;height:19px;background:#e3e6ea"></div>
<div class="a" style="left:969px;top:316px;width:1px;height:19px;background:#e3e6ea"></div>
<div class="a" style="left:1059px;top:316px;width:1px;height:19px;background:#e3e6ea"></div>
<div class="a" style="left:1149px;top:316px;width:1px;height:19px;background:#e3e6ea"></div>
<div class="a" style="left:1269px;top:316px;width:1px;height:19px;background:#e3e6ea"></div>
<div class="a" style="left:1389px;top:316px;width:1px;height:19px;background:#e3e6ea"></div>
<div class="a" style="left:1490px;top:316px;width:1px;height:19px;background:#e3e6ea"></div>
<div class="a" style="left:388px;top:321px;width:9px;height:9px;border:1px solid #383838;background:#fff;box-shadow:0 0 0 1px #fff"></div>
<div class="a" style="left:390px;top:325px;width:5px;height:1px;background:#383838"></div>
<div class="a" style="left:392px;top:323px;width:1px;height:5px;background:#383838"></div>
<svg style="left:411px;top:320px" width="7" height="10" viewBox="0 0 7 10"><path d="M1 0L6.5 4.5L1 9Z" fill="#3d9be9"/></svg>
<div class="t" style="left:435px;top:320px;font-size:11px;color:#2b2b2b">10024</div>
<div class="t" style="left:529px;width:100px;text-align:center;top:320px;font-size:11px;color:#2b2b2b">06/12/2023</div>
<div class="t" style="left:864px;width:100px;text-align:right;top:320px;font-size:11px;color:#2b2b2b">3,000.00</div>
<div class="t" style="left:954px;width:100px;text-align:right;top:320px;font-size:11px;color:#2b2b2b">3,000.00</div>
<div class="t" style="left:1044px;width:100px;text-align:right;top:320px;font-size:11px;color:#2b2b2b">3,480.00</div>
<div class="t" style="left:1155px;top:320px;font-size:11px;letter-spacing:-0.4px;color:#2b2b2b">EUR</div>
<div class="t" style="left:1275px;top:320px;font-size:11px;letter-spacing:0.2px;color:#5e5e5e">Captured</div>
<svg style="left:1380px;top:324px" width="6" height="4" viewBox="0 0 6 4"><path d="M0 0H6L3 4Z" fill="#a9c2d8"/></svg>
<div class="a" style="left:338px;top:336px;width:15px;height:19px;background:#f8f8f8"></div>
<div class="a" style="left:353px;top:336px;width:1px;height:20px;background:#e9ecef"></div>
<div class="a" style="left:338px;top:355px;width:15px;height:1px;background:#e6e9ec"></div>
<div class="a" style="left:354px;top:336px;width:30px;height:20px;background:#fff"></div>
<div class="a" style="left:384px;top:336px;width:1518px;height:20px;background:#fafafa;border-bottom:1px solid #e6e9ec"></div>
<div class="a" style="left:400px;top:336px;width:1090px;height:19px;background:#fafafa"></div>
<div class="a" style="left:429px;top:336px;width:1px;height:19px;background:#e3e6ea"></div>
<div class="a" style="left:529px;top:336px;width:1px;height:19px;background:#e3e6ea"></div>
<div class="a" style="left:629px;top:336px;width:1px;height:19px;background:#e3e6ea"></div>
<div class="a" style="left:729px;top:336px;width:1px;height:19px;background:#e3e6ea"></div>
<div class="a" style="left:879px;top:336px;width:1px;height:19px;background:#e3e6ea"></div>
<div class="a" style="left:969px;top:336px;width:1px;height:19px;background:#e3e6ea"></div>
<div class="a" style="left:1059px;top:336px;width:1px;height:19px;background:#e3e6ea"></div>
<div class="a" style="left:1149px;top:336px;width:1px;height:19px;background:#e3e6ea"></div>
<div class="a" style="left:1269px;top:336px;width:1px;height:19px;background:#e3e6ea"></div>
<div class="a" style="left:1389px;top:336px;width:1px;height:19px;background:#e3e6ea"></div>
<div class="a" style="left:1490px;top:336px;width:1px;height:19px;background:#e3e6ea"></div>
<div class="a" style="left:388px;top:341px;width:9px;height:9px;border:1px solid #383838;background:#fff;box-shadow:0 0 0 1px #fff"></div>
<div class="a" style="left:390px;top:345px;width:5px;height:1px;background:#383838"></div>
<div class="a" style="left:392px;top:343px;width:1px;height:5px;background:#383838"></div>
<svg style="left:411px;top:340px" width="7" height="10" viewBox="0 0 7 10"><path d="M1 0L6.5 4.5L1 9Z" fill="#3d9be9"/></svg>
<div class="t" style="left:435px;top:340px;font-size:11px;color:#2b2b2b">10025</div>
<div class="t" style="left:529px;width:100px;text-align:center;top:340px;font-size:11px;color:#2b2b2b">14/12/2023</div>
<div class="t" style="left:864px;width:100px;text-align:right;top:340px;font-size:11px;color:#2b2b2b">25,000.00</div>
<div class="t" style="left:954px;width:100px;text-align:right;top:340px;font-size:11px;color:#2b2b2b">25,000.00</div>
<div class="t" style="left:1044px;width:100px;text-align:right;top:340px;font-size:11px;color:#2b2b2b">29,000.00</div>
<div class="t" style="left:1155px;top:340px;font-size:11px;letter-spacing:-0.4px;color:#2b2b2b">EUR</div>
<div class="t" style="left:1275px;top:340px;font-size:11px;letter-spacing:0.2px;color:#5e5e5e">Captured</div>
<svg style="left:1380px;top:344px" width="6" height="4" viewBox="0 0 6 4"><path d="M0 0H6L3 4Z" fill="#a9c2d8"/></svg>
<div class="a" style="left:338px;top:356px;width:15px;height:19px;background:#f1f2f4"></div>
<div class="a" style="left:353px;top:356px;width:1px;height:20px;background:#e9ecef"></div>
<div class="a" style="left:338px;top:375px;width:15px;height:1px;background:#e6e9ec"></div>
<div class="a" style="left:354px;top:356px;width:30px;height:20px;background:#fff"></div>
<div class="a" style="left:384px;top:356px;width:1518px;height:20px;background:#f2f3f5;border-bottom:1px solid #e6e9ec"></div>
<div class="a" style="left:400px;top:356px;width:1090px;height:19px;background:#f5f6f8"></div>
<div class="a" style="left:429px;top:356px;width:1px;height:19px;background:#e3e6ea"></div>
<div class="a" style="left:529px;top:356px;width:1px;height:19px;background:#e3e6ea"></div>
<div class="a" style="left:629px;top:356px;width:1px;height:19px;background:#e3e6ea"></div>
<div class="a" style="left:729px;top:356px;width:1px;height:19px;background:#e3e6ea"></div>
<div class="a" style="left:879px;top:356px;width:1px;height:19px;background:#e3e6ea"></div>
<div class="a" style="left:969px;top:356px;width:1px;height:19px;background:#e3e6ea"></div>
<div class="a" style="left:1059px;top:356px;width:1px;height:19px;background:#e3e6ea"></div>
<div class="a" style="left:1149px;top:356px;width:1px;height:19px;background:#e3e6ea"></div>
<div class="a" style="left:1269px;top:356px;width:1px;height:19px;background:#e3e6ea"></div>
<div class="a" style="left:1389px;top:356px;width:1px;height:19px;background:#e3e6ea"></div>
<div class="a" style="left:1490px;top:356px;width:1px;height:19px;background:#e3e6ea"></div>
<div class="a" style="left:388px;top:361px;width:9px;height:9px;border:1px solid #383838;background:#fff;box-shadow:0 0 0 1px #fff"></div>
<div class="a" style="left:390px;top:365px;width:5px;height:1px;background:#383838"></div>
<div class="a" style="left:392px;top:363px;width:1px;height:5px;background:#383838"></div>
<svg style="left:411px;top:360px" width="7" height="10" viewBox="0 0 7 10"><path d="M1 0L6.5 4.5L1 9Z" fill="#3d9be9"/></svg>
<div class="t" style="left:435px;top:360px;font-size:11px;color:#2b2b2b">10027</div>
<div class="t" style="left:529px;width:100px;text-align:center;top:360px;font-size:11px;color:#2b2b2b">05/01/2024</div>
<div class="t" style="left:864px;width:100px;text-align:right;top:360px;font-size:11px;color:#2b2b2b">1,400.00</div>
<div class="t" style="left:954px;width:100px;text-align:right;top:360px;font-size:11px;color:#2b2b2b">1,400.00</div>
<div class="t" style="left:1044px;width:100px;text-align:right;top:360px;font-size:11px;color:#2b2b2b">1,624.00</div>
<div class="t" style="left:1155px;top:360px;font-size:11px;letter-spacing:-0.4px;color:#2b2b2b">EUR</div>
<div class="t" style="left:1275px;top:360px;font-size:11px;letter-spacing:0.2px;color:#5e5e5e">Complete</div>
<svg style="left:1380px;top:364px" width="6" height="4" viewBox="0 0 6 4"><path d="M0 0H6L3 4Z" fill="#a9c2d8"/></svg>
<div class="a" style="left:338px;top:376px;width:15px;height:65px;background:#fff"></div>
<div class="a" style="left:353px;top:376px;width:1549px;height:65px;background:#e8ebee;border-left:1px solid #c4c0bc;border-bottom:1px solid #d8d5d2"></div>
<svg style="left:376px;top:403px" width="5" height="9" viewBox="0 0 5 9"><path d="M0.3 0.3L4.3 4.3L0.3 8.3Z" fill="#1a1a28"/></svg>
<div class="t" style="left:385px;top:403.8px;font-size:11px;letter-spacing:0.18px;color:#1c1c2a">Document Type: Incoming invoice</div>
<div class="t" style="left:888px;top:386.7px;font-size:11px;letter-spacing:0.4px;color:#555">Net total:</div>
<div class="t" style="left:888px;top:403.7px;font-size:11px;letter-spacing:0.1px;color:#555">41,400.00</div>
<div class="t" style="left:888px;top:420.7px;font-size:11px;letter-spacing:0.1px;color:#555">EUR</div>
<div class="a" style="left:338px;top:441px;width:15px;height:48px;background:#fff"></div>
<div class="a" style="left:353px;top:441px;width:1549px;height:48px;background:#e8ebee;border-left:1px solid #c4c0bc;border-bottom:1px solid #d8d5d2"></div>
<svg style="left:376px;top:460px" width="5" height="9" viewBox="0 0 5 9"><path d="M0.3 0.3L4.3 4.3L0.3 8.3Z" fill="#1a1a28"/></svg>
<div class="t" style="left:385px;top:460.3px;font-size:11px;letter-spacing:0.18px;color:#1c1c2a">Document Type: Price inquiry</div>
<div class="t" style="left:919px;top:468.7px;font-size:11px;color:#555">EUR</div>
<div class="t" style="left:888px;top:451.7px;font-size:11px;letter-spacing:0.4px;color:#555">Net total:</div>
<div class="t" style="left:888px;top:468.7px;font-size:11px;letter-spacing:0.1px;color:#555">0.00</div>
<div class="a" style="left:338px;top:489px;width:15px;height:65px;background:#fff"></div>
<div class="a" style="left:353px;top:489px;width:1549px;height:65px;background:#e8ebee;border-left:1px solid #c4c0bc;border-bottom:1px solid #d8d5d2"></div>
<svg style="left:374px;top:516px" width="7" height="7" viewBox="0 0 7 7"><path d="M6 0.2V6H0.2Z" fill="#1a1a28"/></svg>
<div class="t" style="left:385px;top:516.8px;font-size:11px;letter-spacing:0.18px;color:#1c1c2a">Document Type: Purchase Order</div>
<div class="t" style="left:888px;top:499.7px;font-size:11px;letter-spacing:0.4px;color:#555">Net total:</div>
<div class="t" style="left:888px;top:516.7px;font-size:11px;letter-spacing:0.1px;color:#555">163,900.00</div>
<div class="t" style="left:888px;top:533.7px;font-size:11px;letter-spacing:0.1px;color:#555">EUR</div>
<div class="a" style="left:338px;top:554px;width:15px;height:19px;background:#f8f8f8"></div>
<div class="a" style="left:353px;top:554px;width:1px;height:20px;background:#e9ecef"></div>
<div class="a" style="left:338px;top:573px;width:15px;height:1px;background:#e6e9ec"></div>
<div class="a" style="left:354px;top:554px;width:30px;height:20px;background:#fff"></div>
<div class="a" style="left:384px;top:554px;width:1518px;height:20px;background:#fafafa;border-bottom:1px solid #e6e9ec"></div>
<div class="a" style="left:400px;top:554px;width:1090px;height:19px;background:#fafafa"></div>
<div class="a" style="left:429px;top:554px;width:1px;height:19px;background:#e3e6ea"></div>
<div class="a" style="left:529px;top:554px;width:1px;height:19px;background:#e3e6ea"></div>
<div class="a" style="left:629px;top:554px;width:1px;height:19px;background:#e3e6ea"></div>
<div class="a" style="left:729px;top:554px;width:1px;height:19px;background:#e3e6ea"></div>
<div class="a" style="left:879px;top:554px;width:1px;height:19px;background:#e3e6ea"></div>
<div class="a" style="left:969px;top:554px;width:1px;height:19px;background:#e3e6ea"></div>
<div class="a" style="left:1059px;top:554px;width:1px;height:19px;background:#e3e6ea"></div>
<div class="a" style="left:1149px;top:554px;width:1px;height:19px;background:#e3e6ea"></div>
<div class="a" style="left:1269px;top:554px;width:1px;height:19px;background:#e3e6ea"></div>
<div class="a" style="left:1389px;top:554px;width:1px;height:19px;background:#e3e6ea"></div>
<div class="a" style="left:1490px;top:554px;width:1px;height:19px;background:#e3e6ea"></div>
<div class="a" style="left:388px;top:559px;width:9px;height:9px;border:1px solid #383838;background:#fff;box-shadow:0 0 0 1px #fff"></div>
<div class="a" style="left:390px;top:563px;width:5px;height:1px;background:#383838"></div>
<svg style="left:411px;top:558px" width="7" height="10" viewBox="0 0 7 10"><path d="M1 0L6.5 4.5L1 9Z" fill="#3d9be9"/></svg>
<div class="t" style="left:435px;top:558px;font-size:11px;color:#2b2b2b">10025</div>
<div class="t" style="left:529px;width:100px;text-align:center;top:558px;font-size:11px;color:#2b2b2b">20/10/2023</div>
<div class="t" style="left:864px;width:100px;text-align:right;top:558px;font-size:11px;color:#2b2b2b">40,000.00</div>
<div class="t" style="left:954px;width:100px;text-align:right;top:558px;font-size:11px;color:#2b2b2b">40,000.00</div>
<div class="t" style="left:1044px;width:100px;text-align:right;top:558px;font-size:11px;color:#2b2b2b">46,400.00</div>
<div class="t" style="left:1155px;top:558px;font-size:11px;letter-spacing:-0.4px;color:#2b2b2b">EUR</div>
<div class="t" style="left:1275px;top:558px;font-size:11px;letter-spacing:0.2px;color:#5e5e5e">Complete</div>
<svg style="left:1380px;top:562px" width="6" height="4" viewBox="0 0 6 4"><path d="M0 0H6L3 4Z" fill="#a9c2d8"/></svg>
<div class="a" style="left:338px;top:574px;width:15px;height:54px;background:#e8ecef"></div>
<div class="a" style="left:353px;top:574px;width:46px;height:54px;background:#fff"></div>
<div class="a" style="left:399px;top:574px;width:1503px;height:54px;background:#e8ebee"></div>
<div class="a" style="left:403px;top:576px;width:1497px;height:49px;background:#e8ecef;border:1px solid #dde2e6;border-radius:2px"></div>
<div class="a" style="left:418px;top:582px;width:1px;height:21px;background:#cfd8e2"></div>
<div class="a" style="left:468px;top:582px;width:1px;height:21px;background:#cfd8e2"></div>
<div class="a" style="left:598px;top:582px;width:1px;height:21px;background:#cfd8e2"></div>
<div class="a" style="left:698px;top:582px;width:1px;height:21px;background:#cfd8e2"></div>
<div class="a" style="left:898px;top:582px;width:1px;height:21px;background:#cfd8e2"></div>
<div class="a" style="left:998px;top:582px;width:1px;height:21px;background:#cfd8e2"></div>
<div class="a" style="left:1098px;top:582px;width:1px;height:21px;background:#cfd8e2"></div>
<div class="a" style="left:1198px;top:582px;width:1px;height:21px;background:#cfd8e2"></div>
<div class="a" style="left:1299px;top:582px;width:1px;height:21px;background:#cfd8e2"></div>
<div class="a" style="left:404px;top:603px;width:1495px;height:1px;background:#c8d4e0"></div>
<div class="t" style="left:425px;top:588px;font-size:11px;letter-spacing:0.2px;color:#4a6b8c">Pos no.</div>
<div class="t" style="left:903px;top:588px;width:93px;overflow:hidden;font-size:11px;letter-spacing:0.1px;color:#4a6b8c">Required Quantity</div>
<div class="t" style="left:468px;width:130px;top:588px;font-size:11px;letter-spacing:0.2px;color:#4a6b8c;text-align:center">Type</div>
<div class="t" style="left:598px;width:100px;top:588px;font-size:11px;letter-spacing:0.2px;color:#4a6b8c;text-align:center">Part Number</div>
<div class="t" style="left:698px;width:200px;top:588px;font-size:11px;letter-spacing:0.2px;color:#4a6b8c;text-align:center">Description</div>
<div class="t" style="left:998px;width:100px;top:588px;font-size:11px;letter-spacing:0.2px;color:#4a6b8c;text-align:center">Unit price</div>
<div class="t" style="left:1098px;width:100px;top:588px;font-size:11px;letter-spacing:0.2px;color:#4a6b8c;text-align:center">Rebate [%]</div>
<div class="t" style="left:1198px;width:101px;top:588px;font-size:11px;letter-spacing:0.2px;color:#4a6b8c;text-align:center">Final Prices</div>
<div class="a" style="left:404px;top:604px;width:1495px;height:19px;background:#d7dee6"></div>
<div class="a" style="left:418px;top:604px;width:50px;height:19px;background:#f8f8f8"></div>
<div class="a" style="left:598px;top:604px;width:1px;height:19px;background:#e9edf1"></div>
<div class="a" style="left:698px;top:604px;width:1px;height:19px;background:#e9edf1"></div>
<div class="a" style="left:898px;top:604px;width:1px;height:19px;background:#e9edf1"></div>
<div class="a" style="left:998px;top:604px;width:1px;height:19px;background:#e9edf1"></div>
<div class="a" style="left:1098px;top:604px;width:1px;height:19px;background:#e9edf1"></div>
<div class="a" style="left:1198px;top:604px;width:1px;height:19px;background:#e9edf1"></div>
<div class="a" style="left:1299px;top:604px;width:1px;height:19px;background:#e9edf1"></div>
<svg style="left:409px;top:610px" width="5" height="9" viewBox="0 0 5 9"><path d="M0.3 0.3L4.3 4.3L0.3 8.3Z" fill="#333"/></svg>
<div class="t" style="left:424px;top:608px;font-size:11px;color:#2b2b2b">10</div>
<div class="t" style="left:474px;top:608px;font-size:11px;letter-spacing:0.3px;color:#6a6a6a">Item position</div>
<svg style="left:588px;top:612px" width="6" height="4" viewBox="0 0 6 4"><path d="M0 0H6L3 4Z" fill="#a9c2d8"/></svg>
<div class="t" style="left:604px;top:608px;font-size:11px;color:#2b2b2b">000000DEMO0...</div>
<div class="t" style="left:704px;top:608px;font-size:11px;letter-spacing:0.2px;color:#2b2b2b">Engine</div>
<div class="t" style="left:893px;width:100px;text-align:right;top:608px;font-size:11px;color:#2b2b2b">1.00</div>
<div class="t" style="left:993px;width:100px;text-align:right;top:608px;font-size:11px;color:#2b2b2b">40,000.00</div>
<div class="t" style="left:1093px;width:100px;text-align:right;top:608px;font-size:11px;color:#2b2b2b">0.00</div>
<div class="t" style="left:1194px;width:100px;text-align:right;top:608px;font-size:11px;color:#2b2b2b">40,000.00</div>
<div class="a" style="left:1882px;top:604px;width:17px;height:19px;background:#e8ecef"></div>
<svg style="left:1885px;top:604px" width="10" height="18" viewBox="0 0 10 18"><path d="M1 6.5L5 3L9 6.5Z M1 11.5L5 15L9 11.5Z" fill="#a9bccd"/></svg>
<div class="a" style="left:338px;top:628px;width:15px;height:19px;background:#f1f2f4"></div>
<div class="a" style="left:353px;top:628px;width:1px;height:20px;background:#e9ecef"></div>
<div class="a" style="left:338px;top:647px;width:15px;height:1px;background:#e6e9ec"></div>
<div class="a" style="left:354px;top:628px;width:30px;height:20px;background:#fff"></div>
<div class="a" style="left:384px;top:628px;width:1518px;height:20px;background:#f2f3f5;border-bottom:1px solid #e6e9ec"></div>
<div class="a" style="left:400px;top:628px;width:1090px;height:19px;background:#f5f6f8"></div>
<div class="a" style="left:429px;top:628px;width:1px;height:19px;background:#e3e6ea"></div>
<div class="a" style="left:529px;top:628px;width:1px;height:19px;background:#e3e6ea"></div>
<div class="a" style="left:629px;top:628px;width:1px;height:19px;background:#e3e6ea"></div>
<div class="a" style="left:729px;top:628px;width:1px;height:19px;background:#e3e6ea"></div>
<div class="a" style="left:879px;top:628px;width:1px;height:19px;background:#e3e6ea"></div>
<div class="a" style="left:969px;top:628px;width:1px;height:19px;background:#e3e6ea"></div>
<div class="a" style="left:1059px;top:628px;width:1px;height:19px;background:#e3e6ea"></div>
<div class="a" style="left:1149px;top:628px;width:1px;height:19px;background:#e3e6ea"></div>
<div class="a" style="left:1269px;top:628px;width:1px;height:19px;background:#e3e6ea"></div>
<div class="a" style="left:1389px;top:628px;width:1px;height:19px;background:#e3e6ea"></div>
<div class="a" style="left:1490px;top:628px;width:1px;height:19px;background:#e3e6ea"></div>
<div class="a" style="left:388px;top:633px;width:9px;height:9px;border:1px solid #383838;background:#fff;box-shadow:0 0 0 1px #fff"></div>
<div class="a" style="left:390px;top:637px;width:5px;height:1px;background:#383838"></div>
<div class="a" style="left:392px;top:635px;width:1px;height:5px;background:#383838"></div>
<svg style="left:411px;top:632px" width="7" height="10" viewBox="0 0 7 10"><path d="M1 0L6.5 4.5L1 9Z" fill="#3d9be9"/></svg>
<div class="t" style="left:435px;top:632px;font-size:11px;color:#2b2b2b">10026</div>
<div class="t" style="left:529px;width:100px;text-align:center;top:632px;font-size:11px;color:#2b2b2b">23/10/2023</div>
<div class="t" style="left:864px;width:100px;text-align:right;top:632px;font-size:11px;color:#2b2b2b">40,000.00</div>
<div class="t" style="left:954px;width:100px;text-align:right;top:632px;font-size:11px;color:#2b2b2b">40,000.00</div>
<div class="t" style="left:1044px;width:100px;text-align:right;top:632px;font-size:11px;color:#2b2b2b">46,400.00</div>
<div class="t" style="left:1155px;top:632px;font-size:11px;letter-spacing:-0.4px;color:#2b2b2b">EUR</div>
<div class="t" style="left:1275px;top:632px;font-size:11px;letter-spacing:0.2px;color:#5e5e5e">Captured</div>
<svg style="left:1380px;top:636px" width="6" height="4" viewBox="0 0 6 4"><path d="M0 0H6L3 4Z" fill="#a9c2d8"/></svg>
<div class="a" style="left:338px;top:648px;width:15px;height:19px;background:#f8f8f8"></div>
<div class="a" style="left:353px;top:648px;width:1px;height:20px;background:#e9ecef"></div>
<div class="a" style="left:338px;top:667px;width:15px;height:1px;background:#e6e9ec"></div>
<div class="a" style="left:354px;top:648px;width:30px;height:20px;background:#fff"></div>
<div class="a" style="left:384px;top:648px;width:1518px;height:20px;background:#fafafa;border-bottom:1px solid #e6e9ec"></div>
<div class="a" style="left:400px;top:648px;width:1090px;height:19px;background:#fafafa"></div>
<div class="a" style="left:429px;top:648px;width:1px;height:19px;background:#e3e6ea"></div>
<div class="a" style="left:529px;top:648px;width:1px;height:19px;background:#e3e6ea"></div>
<div class="a" style="left:629px;top:648px;width:1px;height:19px;background:#e3e6ea"></div>
<div class="a" style="left:729px;top:648px;width:1px;height:19px;background:#e3e6ea"></div>
<div class="a" style="left:879px;top:648px;width:1px;height:19px;background:#e3e6ea"></div>
<div class="a" style="left:969px;top:648px;width:1px;height:19px;background:#e3e6ea"></div>
<div class="a" style="left:1059px;top:648px;width:1px;height:19px;background:#e3e6ea"></div>
<div class="a" style="left:1149px;top:648px;width:1px;height:19px;background:#e3e6ea"></div>
<div class="a" style="left:1269px;top:648px;width:1px;height:19px;background:#e3e6ea"></div>
<div class="a" style="left:1389px;top:648px;width:1px;height:19px;background:#e3e6ea"></div>
<div class="a" style="left:1490px;top:648px;width:1px;height:19px;background:#e3e6ea"></div>
<div class="a" style="left:388px;top:653px;width:9px;height:9px;border:1px solid #383838;background:#fff;box-shadow:0 0 0 1px #fff"></div>
<div class="a" style="left:390px;top:657px;width:5px;height:1px;background:#383838"></div>
<div class="a" style="left:392px;top:655px;width:1px;height:5px;background:#383838"></div>
<svg style="left:411px;top:652px" width="7" height="10" viewBox="0 0 7 10"><path d="M1 0L6.5 4.5L1 9Z" fill="#3d9be9"/></svg>
<div class="t" style="left:435px;top:652px;font-size:11px;color:#2b2b2b">10027</div>
<div class="t" style="left:529px;width:100px;text-align:center;top:652px;font-size:11px;color:#2b2b2b">24/10/2023</div>
<div class="t" style="left:864px;width:100px;text-align:right;top:652px;font-size:11px;color:#2b2b2b">38,000.00</div>
<div class="t" style="left:954px;width:100px;text-align:right;top:652px;font-size:11px;color:#2b2b2b">38,000.00</div>
<div class="t" style="left:1044px;width:100px;text-align:right;top:652px;font-size:11px;color:#2b2b2b">44,080.00</div>
<div class="t" style="left:1155px;top:652px;font-size:11px;letter-spacing:-0.4px;color:#2b2b2b">EUR</div>
<div class="t" style="left:1275px;top:652px;font-size:11px;letter-spacing:0.2px;color:#5e5e5e">Captured</div>
<svg style="left:1380px;top:656px" width="6" height="4" viewBox="0 0 6 4"><path d="M0 0H6L3 4Z" fill="#a9c2d8"/></svg>
<div class="a" style="left:338px;top:668px;width:15px;height:19px;background:#f1f2f4"></div>
<div class="a" style="left:353px;top:668px;width:1px;height:20px;background:#e9ecef"></div>
<div class="a" style="left:338px;top:687px;width:15px;height:1px;background:#e6e9ec"></div>
<div class="a" style="left:354px;top:668px;width:30px;height:20px;background:#fff"></div>
<div class="a" style="left:384px;top:668px;width:1518px;height:20px;background:#f2f3f5;border-bottom:1px solid #e6e9ec"></div>
<div class="a" style="left:400px;top:668px;width:1090px;height:19px;background:#f5f6f8"></div>
<div class="a" style="left:429px;top:668px;width:1px;height:19px;background:#e3e6ea"></div>
<div class="a" style="left:529px;top:668px;width:1px;height:19px;background:#e3e6ea"></div>
<div class="a" style="left:629px;top:668px;width:1px;height:19px;background:#e3e6ea"></div>
<div class="a" style="left:729px;top:668px;width:1px;height:19px;background:#e3e6ea"></div>
<div class="a" style="left:879px;top:668px;width:1px;height:19px;background:#e3e6ea"></div>
<div class="a" style="left:969px;top:668px;width:1px;height:19px;background:#e3e6ea"></div>
<div class="a" style="left:1059px;top:668px;width:1px;height:19px;background:#e3e6ea"></div>
<div class="a" style="left:1149px;top:668px;width:1px;height:19px;background:#e3e6ea"></div>
<div class="a" style="left:1269px;top:668px;width:1px;height:19px;background:#e3e6ea"></div>
<div class="a" style="left:1389px;top:668px;width:1px;height:19px;background:#e3e6ea"></div>
<div class="a" style="left:1490px;top:668px;width:1px;height:19px;background:#e3e6ea"></div>
<div class="a" style="left:388px;top:673px;width:9px;height:9px;border:1px solid #383838;background:#fff;box-shadow:0 0 0 1px #fff"></div>
<div class="a" style="left:390px;top:677px;width:5px;height:1px;background:#383838"></div>
<div class="a" style="left:392px;top:675px;width:1px;height:5px;background:#383838"></div>
<svg style="left:411px;top:672px" width="7" height="10" viewBox="0 0 7 10"><path d="M1 0L6.5 4.5L1 9Z" fill="#3d9be9"/></svg>
<div class="t" style="left:435px;top:672px;font-size:11px;color:#2b2b2b">10029</div>
<div class="t" style="left:529px;width:100px;text-align:center;top:672px;font-size:11px;color:#2b2b2b">22/11/2023</div>
<div class="t" style="left:864px;width:100px;text-align:right;top:672px;font-size:11px;color:#2b2b2b">0.00</div>
<div class="t" style="left:954px;width:100px;text-align:right;top:672px;font-size:11px;color:#2b2b2b">0.00</div>
<div class="t" style="left:1044px;width:100px;text-align:right;top:672px;font-size:11px;color:#2b2b2b">0.00</div>
<div class="t" style="left:1155px;top:672px;font-size:11px;letter-spacing:-0.4px;color:#2b2b2b">EUR</div>
<div class="t" style="left:1275px;top:672px;font-size:11px;letter-spacing:0.2px;color:#5e5e5e">Complete</div>
<svg style="left:1380px;top:676px" width="6" height="4" viewBox="0 0 6 4"><path d="M0 0H6L3 4Z" fill="#a9c2d8"/></svg>
<div class="a" style="left:338px;top:688px;width:15px;height:19px;background:#f8f8f8"></div>
<div class="a" style="left:353px;top:688px;width:1px;height:20px;background:#e9ecef"></div>
<div class="a" style="left:338px;top:707px;width:15px;height:1px;background:#e6e9ec"></div>
<div class="a" style="left:354px;top:688px;width:30px;height:20px;background:#fff"></div>
<div class="a" style="left:384px;top:688px;width:1518px;height:20px;background:#fafafa;border-bottom:1px solid #e6e9ec"></div>
<div class="a" style="left:400px;top:688px;width:1090px;height:19px;background:#fafafa"></div>
<div class="a" style="left:429px;top:688px;width:1px;height:19px;background:#e3e6ea"></div>
<div class="a" style="left:529px;top:688px;width:1px;height:19px;background:#e3e6ea"></div>
<div class="a" style="left:629px;top:688px;width:1px;height:19px;background:#e3e6ea"></div>
<div class="a" style="left:729px;top:688px;width:1px;height:19px;background:#e3e6ea"></div>
<div class="a" style="left:879px;top:688px;width:1px;height:19px;background:#e3e6ea"></div>
<div class="a" style="left:969px;top:688px;width:1px;height:19px;background:#e3e6ea"></div>
<div class="a" style="left:1059px;top:688px;width:1px;height:19px;background:#e3e6ea"></div>
<div class="a" style="left:1149px;top:688px;width:1px;height:19px;background:#e3e6ea"></div>
<div class="a" style="left:1269px;top:688px;width:1px;height:19px;background:#e3e6ea"></div>
<div class="a" style="left:1389px;top:688px;width:1px;height:19px;background:#e3e6ea"></div>
<div class="a" style="left:1490px;top:688px;width:1px;height:19px;background:#e3e6ea"></div>
<div class="a" style="left:388px;top:693px;width:9px;height:9px;border:1px solid #383838;background:#fff;box-shadow:0 0 0 1px #fff"></div>
<div class="a" style="left:390px;top:697px;width:5px;height:1px;background:#383838"></div>
<div class="a" style="left:392px;top:695px;width:1px;height:5px;background:#383838"></div>
<svg style="left:411px;top:692px" width="7" height="10" viewBox="0 0 7 10"><path d="M1 0L6.5 4.5L1 9Z" fill="#3d9be9"/></svg>
<div class="t" style="left:435px;top:692px;font-size:11px;color:#2b2b2b">10030</div>
<div class="t" style="left:529px;width:100px;text-align:center;top:692px;font-size:11px;color:#2b2b2b">24/11/2023</div>
<div class="t" style="left:864px;width:100px;text-align:right;top:692px;font-size:11px;color:#2b2b2b">1,500.00</div>
<div class="t" style="left:954px;width:100px;text-align:right;top:692px;font-size:11px;color:#2b2b2b">1,500.00</div>
<div class="t" style="left:1044px;width:100px;text-align:right;top:692px;font-size:11px;color:#2b2b2b">1,740.00</div>
<div class="t" style="left:1155px;top:692px;font-size:11px;letter-spacing:-0.4px;color:#2b2b2b">EUR</div>
<div class="t" style="left:1275px;top:692px;font-size:11px;letter-spacing:0.2px;color:#5e5e5e">Complete</div>
<svg style="left:1380px;top:696px" width="6" height="4" viewBox="0 0 6 4"><path d="M0 0H6L3 4Z" fill="#a9c2d8"/></svg>
<div class="a" style="left:338px;top:708px;width:15px;height:19px;background:#f1f2f4"></div>
<div class="a" style="left:353px;top:708px;width:1px;height:20px;background:#e9ecef"></div>
<div class="a" style="left:338px;top:727px;width:15px;height:1px;background:#e6e9ec"></div>
<div class="a" style="left:354px;top:708px;width:30px;height:20px;background:#fff"></div>
<div class="a" style="left:384px;top:708px;width:1518px;height:20px;background:#f2f3f5;border-bottom:1px solid #e6e9ec"></div>
<div class="a" style="left:400px;top:708px;width:1090px;height:19px;background:#f5f6f8"></div>
<div class="a" style="left:429px;top:708px;width:1px;height:19px;background:#e3e6ea"></div>
<div class="a" style="left:529px;top:708px;width:1px;height:19px;background:#e3e6ea"></div>
<div class="a" style="left:629px;top:708px;width:1px;height:19px;background:#e3e6ea"></div>
<div class="a" style="left:729px;top:708px;width:1px;height:19px;background:#e3e6ea"></div>
<div class="a" style="left:879px;top:708px;width:1px;height:19px;background:#e3e6ea"></div>
<div class="a" style="left:969px;top:708px;width:1px;height:19px;background:#e3e6ea"></div>
<div class="a" style="left:1059px;top:708px;width:1px;height:19px;background:#e3e6ea"></div>
<div class="a" style="left:1149px;top:708px;width:1px;height:19px;background:#e3e6ea"></div>
<div class="a" style="left:1269px;top:708px;width:1px;height:19px;background:#e3e6ea"></div>
<div class="a" style="left:1389px;top:708px;width:1px;height:19px;background:#e3e6ea"></div>
<div class="a" style="left:1490px;top:708px;width:1px;height:19px;background:#e3e6ea"></div>
<div class="a" style="left:388px;top:713px;width:9px;height:9px;border:1px solid #383838;background:#fff;box-shadow:0 0 0 1px #fff"></div>
<div class="a" style="left:390px;top:717px;width:5px;height:1px;background:#383838"></div>
<div class="a" style="left:392px;top:715px;width:1px;height:5px;background:#383838"></div>
<svg style="left:411px;top:712px" width="7" height="10" viewBox="0 0 7 10"><path d="M1 0L6.5 4.5L1 9Z" fill="#3d9be9"/></svg>
<div class="t" style="left:435px;top:712px;font-size:11px;color:#2b2b2b">10031</div>
<div class="t" style="left:529px;width:100px;text-align:center;top:712px;font-size:11px;color:#2b2b2b">24/11/2023</div>
<div class="t" style="left:864px;width:100px;text-align:right;top:712px;font-size:11px;color:#2b2b2b">0.00</div>
<div class="t" style="left:954px;width:100px;text-align:right;top:712px;font-size:11px;color:#2b2b2b">0.00</div>
<div class="t" style="left:1044px;width:100px;text-align:right;top:712px;font-size:11px;color:#2b2b2b">0.00</div>
<div class="t" style="left:1155px;top:712px;font-size:11px;letter-spacing:-0.4px;color:#2b2b2b">EUR</div>
<div class="t" style="left:1275px;top:712px;font-size:11px;letter-spacing:0.2px;color:#3a3a3a">teilübernommen</div>
<svg style="left:1380px;top:716px" width="6" height="4" viewBox="0 0 6 4"><path d="M0 0H6L3 4Z" fill="#a9c2d8"/></svg>
<div class="a" style="left:338px;top:728px;width:15px;height:19px;background:#f8f8f8"></div>
<div class="a" style="left:353px;top:728px;width:1px;height:20px;background:#e9ecef"></div>
<div class="a" style="left:338px;top:747px;width:15px;height:1px;background:#e6e9ec"></div>
<div class="a" style="left:354px;top:728px;width:30px;height:20px;background:#fff"></div>
<div class="a" style="left:384px;top:728px;width:1518px;height:20px;background:#fafafa;border-bottom:1px solid #e6e9ec"></div>
<div class="a" style="left:400px;top:728px;width:1090px;height:19px;background:#fafafa"></div>
<div class="a" style="left:429px;top:728px;width:1px;height:19px;background:#e3e6ea"></div>
<div class="a" style="left:529px;top:728px;width:1px;height:19px;background:#e3e6ea"></div>
<div class="a" style="left:629px;top:728px;width:1px;height:19px;background:#e3e6ea"></div>
<div class="a" style="left:729px;top:728px;width:1px;height:19px;background:#e3e6ea"></div>
<div class="a" style="left:879px;top:728px;width:1px;height:19px;background:#e3e6ea"></div>
<div class="a" style="left:969px;top:728px;width:1px;height:19px;background:#e3e6ea"></div>
<div class="a" style="left:1059px;top:728px;width:1px;height:19px;background:#e3e6ea"></div>
<div class="a" style="left:1149px;top:728px;width:1px;height:19px;background:#e3e6ea"></div>
<div class="a" style="left:1269px;top:728px;width:1px;height:19px;background:#e3e6ea"></div>
<div class="a" style="left:1389px;top:728px;width:1px;height:19px;background:#e3e6ea"></div>
<div class="a" style="left:1490px;top:728px;width:1px;height:19px;background:#e3e6ea"></div>
<div class="a" style="left:388px;top:733px;width:9px;height:9px;border:1px solid #383838;background:#fff;box-shadow:0 0 0 1px #fff"></div>
<div class="a" style="left:390px;top:737px;width:5px;height:1px;background:#383838"></div>
<div class="a" style="left:392px;top:735px;width:1px;height:5px;background:#383838"></div>
<svg style="left:411px;top:732px" width="7" height="10" viewBox="0 0 7 10"><path d="M1 0L6.5 4.5L1 9Z" fill="#3d9be9"/></svg>
<div class="t" style="left:435px;top:732px;font-size:11px;color:#2b2b2b">10032</div>
<div class="t" style="left:529px;width:100px;text-align:center;top:732px;font-size:11px;color:#2b2b2b">27/11/2023</div>
<div class="t" style="left:864px;width:100px;text-align:right;top:732px;font-size:11px;color:#2b2b2b">15,000.00</div>
<div class="t" style="left:954px;width:100px;text-align:right;top:732px;font-size:11px;color:#2b2b2b">15,000.00</div>
<div class="t" style="left:1044px;width:100px;text-align:right;top:732px;font-size:11px;color:#2b2b2b">17,400.00</div>
<div class="t" style="left:1155px;top:732px;font-size:11px;letter-spacing:-0.4px;color:#2b2b2b">EUR</div>
<div class="t" style="left:1275px;top:732px;font-size:11px;letter-spacing:0.2px;color:#5e5e5e">Complete</div>
<svg style="left:1380px;top:736px" width="6" height="4" viewBox="0 0 6 4"><path d="M0 0H6L3 4Z" fill="#a9c2d8"/></svg>
<div class="a" style="left:338px;top:748px;width:15px;height:19px;background:#f1f2f4"></div>
<div class="a" style="left:353px;top:748px;width:1px;height:20px;background:#e9ecef"></div>
<div class="a" style="left:338px;top:767px;width:15px;height:1px;background:#e6e9ec"></div>
<div class="a" style="left:354px;top:748px;width:30px;height:20px;background:#fff"></div>
<div class="a" style="left:384px;top:748px;width:1518px;height:20px;background:#f2f3f5;border-bottom:1px solid #e6e9ec"></div>
<div class="a" style="left:400px;top:748px;width:1090px;height:19px;background:#f5f6f8"></div>
<div class="a" style="left:429px;top:748px;width:1px;height:19px;background:#e3e6ea"></div>
<div class="a" style="left:529px;top:748px;width:1px;height:19px;background:#e3e6ea"></div>
<div class="a" style="left:629px;top:748px;width:1px;height:19px;background:#e3e6ea"></div>
<div class="a" style="left:729px;top:748px;width:1px;height:19px;background:#e3e6ea"></div>
<div class="a" style="left:879px;top:748px;width:1px;height:19px;background:#e3e6ea"></div>
<div class="a" style="left:969px;top:748px;width:1px;height:19px;background:#e3e6ea"></div>
<div class="a" style="left:1059px;top:748px;width:1px;height:19px;background:#e3e6ea"></div>
<div class="a" style="left:1149px;top:748px;width:1px;height:19px;background:#e3e6ea"></div>
<div class="a" style="left:1269px;top:748px;width:1px;height:19px;background:#e3e6ea"></div>
<div class="a" style="left:1389px;top:748px;width:1px;height:19px;background:#e3e6ea"></div>
<div class="a" style="left:1490px;top:748px;width:1px;height:19px;background:#e3e6ea"></div>
<div class="a" style="left:388px;top:753px;width:9px;height:9px;border:1px solid #383838;background:#fff;box-shadow:0 0 0 1px #fff"></div>
<div class="a" style="left:390px;top:757px;width:5px;height:1px;background:#383838"></div>
<div class="a" style="left:392px;top:755px;width:1px;height:5px;background:#383838"></div>
<svg style="left:411px;top:752px" width="7" height="10" viewBox="0 0 7 10"><path d="M1 0L6.5 4.5L1 9Z" fill="#3d9be9"/></svg>
<div class="t" style="left:435px;top:752px;font-size:11px;color:#2b2b2b">10033</div>
<div class="t" style="left:529px;width:100px;text-align:center;top:752px;font-size:11px;color:#2b2b2b">06/12/2023</div>
<div class="t" style="left:864px;width:100px;text-align:right;top:752px;font-size:11px;color:#2b2b2b">3,000.00</div>
<div class="t" style="left:954px;width:100px;text-align:right;top:752px;font-size:11px;color:#2b2b2b">3,000.00</div>
<div class="t" style="left:1044px;width:100px;text-align:right;top:752px;font-size:11px;color:#2b2b2b">3,480.00</div>
<div class="t" style="left:1155px;top:752px;font-size:11px;letter-spacing:-0.4px;color:#2b2b2b">EUR</div>
<div class="t" style="left:1275px;top:752px;font-size:11px;letter-spacing:0.2px;color:#5e5e5e">Complete</div>
<svg style="left:1380px;top:756px" width="6" height="4" viewBox="0 0 6 4"><path d="M0 0H6L3 4Z" fill="#a9c2d8"/></svg>
<div class="a" style="left:338px;top:768px;width:15px;height:19px;background:#f8f8f8"></div>
<div class="a" style="left:353px;top:768px;width:1px;height:20px;background:#e9ecef"></div>
<div class="a" style="left:338px;top:787px;width:15px;height:1px;background:#e6e9ec"></div>
<div class="a" style="left:354px;top:768px;width:30px;height:20px;background:#fff"></div>
<div class="a" style="left:384px;top:768px;width:1518px;height:20px;background:#fafafa;border-bottom:1px solid #e6e9ec"></div>
<div class="a" style="left:400px;top:768px;width:1090px;height:19px;background:#fafafa"></div>
<div class="a" style="left:429px;top:768px;width:1px;height:19px;background:#e3e6ea"></div>
<div class="a" style="left:529px;top:768px;width:1px;height:19px;background:#e3e6ea"></div>
<div class="a" style="left:629px;top:768px;width:1px;height:19px;background:#e3e6ea"></div>
<div class="a" style="left:729px;top:768px;width:1px;height:19px;background:#e3e6ea"></div>
<div class="a" style="left:879px;top:768px;width:1px;height:19px;background:#e3e6ea"></div>
<div class="a" style="left:969px;top:768px;width:1px;height:19px;background:#e3e6ea"></div>
<div class="a" style="left:1059px;top:768px;width:1px;height:19px;background:#e3e6ea"></div>
<div class="a" style="left:1149px;top:768px;width:1px;height:19px;background:#e3e6ea"></div>
<div class="a" style="left:1269px;top:768px;width:1px;height:19px;background:#e3e6ea"></div>
<div class="a" style="left:1389px;top:768px;width:1px;height:19px;background:#e3e6ea"></div>
<div class="a" style="left:1490px;top:768px;width:1px;height:19px;background:#e3e6ea"></div>
<div class="a" style="left:388px;top:773px;width:9px;height:9px;border:1px solid #383838;background:#fff;box-shadow:0 0 0 1px #fff"></div>
<div class="a" style="left:390px;top:777px;width:5px;height:1px;background:#383838"></div>
<div class="a" style="left:392px;top:775px;width:1px;height:5px;background:#383838"></div>
<svg style="left:411px;top:772px" width="7" height="10" viewBox="0 0 7 10"><path d="M1 0L6.5 4.5L1 9Z" fill="#3d9be9"/></svg>
<div class="t" style="left:435px;top:772px;font-size:11px;color:#2b2b2b">10034</div>
<div class="t" style="left:529px;width:100px;text-align:center;top:772px;font-size:11px;color:#2b2b2b">11/12/2023</div>
<div class="t" style="left:864px;width:100px;text-align:right;top:772px;font-size:11px;color:#2b2b2b">0.00</div>
<div class="t" style="left:954px;width:100px;text-align:right;top:772px;font-size:11px;color:#2b2b2b">0.00</div>
<div class="t" style="left:1044px;width:100px;text-align:right;top:772px;font-size:11px;color:#2b2b2b">0.00</div>
<div class="t" style="left:1155px;top:772px;font-size:11px;letter-spacing:-0.4px;color:#2b2b2b">EUR</div>
<div class="t" style="left:1275px;top:772px;font-size:11px;letter-spacing:0.2px;color:#5e5e5e">Captured</div>
<svg style="left:1380px;top:776px" width="6" height="4" viewBox="0 0 6 4"><path d="M0 0H6L3 4Z" fill="#a9c2d8"/></svg>
<div class="a" style="left:338px;top:788px;width:15px;height:19px;background:#f1f2f4"></div>
<div class="a" style="left:353px;top:788px;width:1px;height:20px;background:#e9ecef"></div>
<div class="a" style="left:338px;top:807px;width:15px;height:1px;background:#e6e9ec"></div>
<div class="a" style="left:354px;top:788px;width:30px;height:20px;background:#fff"></div>
<div class="a" style="left:384px;top:788px;width:1518px;height:20px;background:#f2f3f5;border-bottom:1px solid #e6e9ec"></div>
<div class="a" style="left:400px;top:788px;width:1090px;height:19px;background:#f5f6f8"></div>
<div class="a" style="left:429px;top:788px;width:1px;height:19px;background:#e3e6ea"></div>
<div class="a" style="left:529px;top:788px;width:1px;height:19px;background:#e3e6ea"></div>
<div class="a" style="left:629px;top:788px;width:1px;height:19px;background:#e3e6ea"></div>
<div class="a" style="left:729px;top:788px;width:1px;height:19px;background:#e3e6ea"></div>
<div class="a" style="left:879px;top:788px;width:1px;height:19px;background:#e3e6ea"></div>
<div class="a" style="left:969px;top:788px;width:1px;height:19px;background:#e3e6ea"></div>
<div class="a" style="left:1059px;top:788px;width:1px;height:19px;background:#e3e6ea"></div>
<div class="a" style="left:1149px;top:788px;width:1px;height:19px;background:#e3e6ea"></div>
<div class="a" style="left:1269px;top:788px;width:1px;height:19px;background:#e3e6ea"></div>
<div class="a" style="left:1389px;top:788px;width:1px;height:19px;background:#e3e6ea"></div>
<div class="a" style="left:1490px;top:788px;width:1px;height:19px;background:#e3e6ea"></div>
<div class="a" style="left:388px;top:793px;width:9px;height:9px;border:1px solid #383838;background:#fff;box-shadow:0 0 0 1px #fff"></div>
<div class="a" style="left:390px;top:797px;width:5px;height:1px;background:#383838"></div>
<div class="a" style="left:392px;top:795px;width:1px;height:5px;background:#383838"></div>
<svg style="left:411px;top:792px" width="7" height="10" viewBox="0 0 7 10"><path d="M1 0L6.5 4.5L1 9Z" fill="#3d9be9"/></svg>
<div class="t" style="left:435px;top:792px;font-size:11px;color:#2b2b2b">10035</div>
<div class="t" style="left:529px;width:100px;text-align:center;top:792px;font-size:11px;color:#2b2b2b">11/12/2023</div>
<div class="t" style="left:864px;width:100px;text-align:right;top:792px;font-size:11px;color:#2b2b2b">0.00</div>
<div class="t" style="left:954px;width:100px;text-align:right;top:792px;font-size:11px;color:#2b2b2b">0.00</div>
<div class="t" style="left:1044px;width:100px;text-align:right;top:792px;font-size:11px;color:#2b2b2b">0.00</div>
<div class="t" style="left:1155px;top:792px;font-size:11px;letter-spacing:-0.4px;color:#2b2b2b">EUR</div>
<div class="t" style="left:1275px;top:792px;font-size:11px;letter-spacing:0.2px;color:#5e5e5e">Captured</div>
<svg style="left:1380px;top:796px" width="6" height="4" viewBox="0 0 6 4"><path d="M0 0H6L3 4Z" fill="#a9c2d8"/></svg>
<div class="a" style="left:338px;top:808px;width:15px;height:19px;background:#f8f8f8"></div>
<div class="a" style="left:353px;top:808px;width:1px;height:20px;background:#e9ecef"></div>
<div class="a" style="left:338px;top:827px;width:15px;height:1px;background:#e6e9ec"></div>
<div class="a" style="left:354px;top:808px;width:30px;height:20px;background:#fff"></div>
<div class="a" style="left:384px;top:808px;width:1518px;height:20px;background:#fafafa;border-bottom:1px solid #e6e9ec"></div>
<div class="a" style="left:400px;top:808px;width:1090px;height:19px;background:#fafafa"></div>
<div class="a" style="left:429px;top:808px;width:1px;height:19px;background:#e3e6ea"></div>
<div class="a" style="left:529px;top:808px;width:1px;height:19px;background:#e3e6ea"></div>
<div class="a" style="left:629px;top:808px;width:1px;height:19px;background:#e3e6ea"></div>
<div class="a" style="left:729px;top:808px;width:1px;height:19px;background:#e3e6ea"></div>
<div class="a" style="left:879px;top:808px;width:1px;height:19px;background:#e3e6ea"></div>
<div class="a" style="left:969px;top:808px;width:1px;height:19px;background:#e3e6ea"></div>
<div class="a" style="left:1059px;top:808px;width:1px;height:19px;background:#e3e6ea"></div>
<div class="a" style="left:1149px;top:808px;width:1px;height:19px;background:#e3e6ea"></div>
<div class="a" style="left:1269px;top:808px;width:1px;height:19px;background:#e3e6ea"></div>
<div class="a" style="left:1389px;top:808px;width:1px;height:19px;background:#e3e6ea"></div>
<div class="a" style="left:1490px;top:808px;width:1px;height:19px;background:#e3e6ea"></div>
<div class="a" style="left:388px;top:813px;width:9px;height:9px;border:1px solid #383838;background:#fff;box-shadow:0 0 0 1px #fff"></div>
<div class="a" style="left:390px;top:817px;width:5px;height:1px;background:#383838"></div>
<div class="a" style="left:392px;top:815px;width:1px;height:5px;background:#383838"></div>
<svg style="left:411px;top:812px" width="7" height="10" viewBox="0 0 7 10"><path d="M1 0L6.5 4.5L1 9Z" fill="#3d9be9"/></svg>
<div class="t" style="left:435px;top:812px;font-size:11px;color:#2b2b2b">10036</div>
<div class="t" style="left:529px;width:100px;text-align:center;top:812px;font-size:11px;color:#2b2b2b">14/12/2023</div>
<div class="t" style="left:864px;width:100px;text-align:right;top:812px;font-size:11px;color:#2b2b2b">25,000.00</div>
<div class="t" style="left:954px;width:100px;text-align:right;top:812px;font-size:11px;color:#2b2b2b">25,000.00</div>
<div class="t" style="left:1044px;width:100px;text-align:right;top:812px;font-size:11px;color:#2b2b2b">29,000.00</div>
<div class="t" style="left:1155px;top:812px;font-size:11px;letter-spacing:-0.4px;color:#2b2b2b">EUR</div>
<div class="t" style="left:1275px;top:812px;font-size:11px;letter-spacing:0.2px;color:#5e5e5e">Complete</div>
<svg style="left:1380px;top:816px" width="6" height="4" viewBox="0 0 6 4"><path d="M0 0H6L3 4Z" fill="#a9c2d8"/></svg>
<div class="a" style="left:338px;top:828px;width:15px;height:19px;background:#f1f2f4"></div>
<div class="a" style="left:353px;top:828px;width:1px;height:20px;background:#e9ecef"></div>
<div class="a" style="left:338px;top:847px;width:15px;height:1px;background:#e6e9ec"></div>
<div class="a" style="left:354px;top:828px;width:30px;height:20px;background:#fff"></div>
<div class="a" style="left:384px;top:828px;width:1518px;height:20px;background:#f2f3f5;border-bottom:1px solid #e6e9ec"></div>
<div class="a" style="left:400px;top:828px;width:1090px;height:19px;background:#f5f6f8"></div>
<div class="a" style="left:429px;top:828px;width:1px;height:19px;background:#e3e6ea"></div>
<div class="a" style="left:529px;top:828px;width:1px;height:19px;background:#e3e6ea"></div>
<div class="a" style="left:629px;top:828px;width:1px;height:19px;background:#e3e6ea"></div>
<div class="a" style="left:729px;top:828px;width:1px;height:19px;background:#e3e6ea"></div>
<div class="a" style="left:879px;top:828px;width:1px;height:19px;background:#e3e6ea"></div>
<div class="a" style="left:969px;top:828px;width:1px;height:19px;background:#e3e6ea"></div>
<div class="a" style="left:1059px;top:828px;width:1px;height:19px;background:#e3e6ea"></div>
<div class="a" style="left:1149px;top:828px;width:1px;height:19px;background:#e3e6ea"></div>
<div class="a" style="left:1269px;top:828px;width:1px;height:19px;background:#e3e6ea"></div>
<div class="a" style="left:1389px;top:828px;width:1px;height:19px;background:#e3e6ea"></div>
<div class="a" style="left:1490px;top:828px;width:1px;height:19px;background:#e3e6ea"></div>
<div class="a" style="left:388px;top:833px;width:9px;height:9px;border:1px solid #383838;background:#fff;box-shadow:0 0 0 1px #fff"></div>
<div class="a" style="left:390px;top:837px;width:5px;height:1px;background:#383838"></div>
<div class="a" style="left:392px;top:835px;width:1px;height:5px;background:#383838"></div>
<svg style="left:411px;top:832px" width="7" height="10" viewBox="0 0 7 10"><path d="M1 0L6.5 4.5L1 9Z" fill="#3d9be9"/></svg>
<div class="t" style="left:435px;top:832px;font-size:11px;color:#2b2b2b">10037</div>
<div class="t" style="left:529px;width:100px;text-align:center;top:832px;font-size:11px;color:#2b2b2b">21/12/2023</div>
<div class="t" style="left:864px;width:100px;text-align:right;top:832px;font-size:11px;color:#2b2b2b">0.00</div>
<div class="t" style="left:954px;width:100px;text-align:right;top:832px;font-size:11px;color:#2b2b2b">0.00</div>
<div class="t" style="left:1044px;width:100px;text-align:right;top:832px;font-size:11px;color:#2b2b2b">0.00</div>
<div class="t" style="left:1155px;top:832px;font-size:11px;letter-spacing:-0.4px;color:#2b2b2b">EUR</div>
<div class="t" style="left:1275px;top:832px;font-size:11px;letter-spacing:0.2px;color:#5e5e5e">Captured</div>
<svg style="left:1380px;top:836px" width="6" height="4" viewBox="0 0 6 4"><path d="M0 0H6L3 4Z" fill="#a9c2d8"/></svg>
<div class="a" style="left:338px;top:848px;width:15px;height:19px;background:#f8f8f8"></div>
<div class="a" style="left:353px;top:848px;width:1px;height:20px;background:#e9ecef"></div>
<div class="a" style="left:338px;top:867px;width:15px;height:1px;background:#e6e9ec"></div>
<div class="a" style="left:354px;top:848px;width:30px;height:20px;background:#fff"></div>
<div class="a" style="left:384px;top:848px;width:1518px;height:20px;background:#fafafa;border-bottom:1px solid #e6e9ec"></div>
<div class="a" style="left:400px;top:848px;width:1090px;height:19px;background:#fafafa"></div>
<div class="a" style="left:429px;top:848px;width:1px;height:19px;background:#e3e6ea"></div>
<div class="a" style="left:529px;top:848px;width:1px;height:19px;background:#e3e6ea"></div>
<div class="a" style="left:629px;top:848px;width:1px;height:19px;background:#e3e6ea"></div>
<div class="a" style="left:729px;top:848px;width:1px;height:19px;background:#e3e6ea"></div>
<div class="a" style="left:879px;top:848px;width:1px;height:19px;background:#e3e6ea"></div>
<div class="a" style="left:969px;top:848px;width:1px;height:19px;background:#e3e6ea"></div>
<div class="a" style="left:1059px;top:848px;width:1px;height:19px;background:#e3e6ea"></div>
<div class="a" style="left:1149px;top:848px;width:1px;height:19px;background:#e3e6ea"></div>
<div class="a" style="left:1269px;top:848px;width:1px;height:19px;background:#e3e6ea"></div>
<div class="a" style="left:1389px;top:848px;width:1px;height:19px;background:#e3e6ea"></div>
<div class="a" style="left:1490px;top:848px;width:1px;height:19px;background:#e3e6ea"></div>
<div class="a" style="left:388px;top:853px;width:9px;height:9px;border:1px solid #383838;background:#fff;box-shadow:0 0 0 1px #fff"></div>
<div class="a" style="left:390px;top:857px;width:5px;height:1px;background:#383838"></div>
<div class="a" style="left:392px;top:855px;width:1px;height:5px;background:#383838"></div>
<svg style="left:411px;top:852px" width="7" height="10" viewBox="0 0 7 10"><path d="M1 0L6.5 4.5L1 9Z" fill="#3d9be9"/></svg>
<div class="t" style="left:435px;top:852px;font-size:11px;color:#2b2b2b">10038</div>
<div class="t" style="left:529px;width:100px;text-align:center;top:852px;font-size:11px;color:#2b2b2b">05/01/2024</div>
<div class="t" style="left:864px;width:100px;text-align:right;top:852px;font-size:11px;color:#2b2b2b">1,400.00</div>
<div class="t" style="left:954px;width:100px;text-align:right;top:852px;font-size:11px;color:#2b2b2b">1,400.00</div>
<div class="t" style="left:1044px;width:100px;text-align:right;top:852px;font-size:11px;color:#2b2b2b">1,624.00</div>
<div class="t" style="left:1155px;top:852px;font-size:11px;letter-spacing:-0.4px;color:#2b2b2b">EUR</div>
<div class="t" style="left:1275px;top:852px;font-size:11px;letter-spacing:0.2px;color:#5e5e5e">Complete</div>
<svg style="left:1380px;top:856px" width="6" height="4" viewBox="0 0 6 4"><path d="M0 0H6L3 4Z" fill="#a9c2d8"/></svg>
<div class="a" style="left:338px;top:868px;width:15px;height:19px;background:#f1f2f4"></div>
<div class="a" style="left:353px;top:868px;width:1px;height:20px;background:#e9ecef"></div>
<div class="a" style="left:338px;top:887px;width:15px;height:1px;background:#e6e9ec"></div>
<div class="a" style="left:354px;top:868px;width:30px;height:20px;background:#fff"></div>
<div class="a" style="left:384px;top:868px;width:1518px;height:20px;background:#f2f3f5;border-bottom:1px solid #e6e9ec"></div>
<div class="a" style="left:400px;top:868px;width:1090px;height:19px;background:#f5f6f8"></div>
<div class="a" style="left:429px;top:868px;width:1px;height:19px;background:#e3e6ea"></div>
<div class="a" style="left:529px;top:868px;width:1px;height:19px;background:#e3e6ea"></div>
<div class="a" style="left:629px;top:868px;width:1px;height:19px;background:#e3e6ea"></div>
<div class="a" style="left:729px;top:868px;width:1px;height:19px;background:#e3e6ea"></div>
<div class="a" style="left:879px;top:868px;width:1px;height:19px;background:#e3e6ea"></div>
<div class="a" style="left:969px;top:868px;width:1px;height:19px;background:#e3e6ea"></div>
<div class="a" style="left:1059px;top:868px;width:1px;height:19px;background:#e3e6ea"></div>
<div class="a" style="left:1149px;top:868px;width:1px;height:19px;background:#e3e6ea"></div>
<div class="a" style="left:1269px;top:868px;width:1px;height:19px;background:#e3e6ea"></div>
<div class="a" style="left:1389px;top:868px;width:1px;height:19px;background:#e3e6ea"></div>
<div class="a" style="left:1490px;top:868px;width:1px;height:19px;background:#e3e6ea"></div>
<div class="a" style="left:388px;top:873px;width:9px;height:9px;border:1px solid #383838;background:#fff;box-shadow:0 0 0 1px #fff"></div>
<div class="a" style="left:390px;top:877px;width:5px;height:1px;background:#383838"></div>
<div class="a" style="left:392px;top:875px;width:1px;height:5px;background:#383838"></div>
<svg style="left:411px;top:872px" width="7" height="10" viewBox="0 0 7 10"><path d="M1 0L6.5 4.5L1 9Z" fill="#3d9be9"/></svg>
<div class="t" style="left:435px;top:872px;font-size:11px;color:#2b2b2b">10039</div>
<div class="t" style="left:529px;width:100px;text-align:center;top:872px;font-size:11px;color:#2b2b2b">10/01/2024</div>
<div class="t" style="left:864px;width:100px;text-align:right;top:872px;font-size:11px;color:#2b2b2b">0.00</div>
<div class="t" style="left:954px;width:100px;text-align:right;top:872px;font-size:11px;color:#2b2b2b">0.00</div>
<div class="t" style="left:1044px;width:100px;text-align:right;top:872px;font-size:11px;color:#2b2b2b">0.00</div>
<div class="t" style="left:1155px;top:872px;font-size:11px;letter-spacing:-0.4px;color:#2b2b2b">EUR</div>
<div class="t" style="left:1275px;top:872px;font-size:11px;letter-spacing:0.2px;color:#5e5e5e">Captured</div>
<svg style="left:1380px;top:876px" width="6" height="4" viewBox="0 0 6 4"><path d="M0 0H6L3 4Z" fill="#a9c2d8"/></svg>
<div class="a" style="left:338px;top:888px;width:15px;height:19px;background:#f8f8f8"></div>
<div class="a" style="left:353px;top:888px;width:1px;height:20px;background:#e9ecef"></div>
<div class="a" style="left:338px;top:907px;width:15px;height:1px;background:#e6e9ec"></div>
<div class="a" style="left:354px;top:888px;width:30px;height:20px;background:#fff"></div>
<div class="a" style="left:384px;top:888px;width:1518px;height:20px;background:#fafafa;border-bottom:1px solid #e6e9ec"></div>
<div class="a" style="left:400px;top:888px;width:1090px;height:19px;background:#fafafa"></div>
<div class="a" style="left:429px;top:888px;width:1px;height:19px;background:#e3e6ea"></div>
<div class="a" style="left:529px;top:888px;width:1px;height:19px;background:#e3e6ea"></div>
<div class="a" style="left:629px;top:888px;width:1px;height:19px;background:#e3e6ea"></div>
<div class="a" style="left:729px;top:888px;width:1px;height:19px;background:#e3e6ea"></div>
<div class="a" style="left:879px;top:888px;width:1px;height:19px;background:#e3e6ea"></div>
<div class="a" style="left:969px;top:888px;width:1px;height:19px;background:#e3e6ea"></div>
<div class="a" style="left:1059px;top:888px;width:1px;height:19px;background:#e3e6ea"></div>
<div class="a" style="left:1149px;top:888px;width:1px;height:19px;background:#e3e6ea"></div>
<div class="a" style="left:1269px;top:888px;width:1px;height:19px;background:#e3e6ea"></div>
<div class="a" style="left:1389px;top:888px;width:1px;height:19px;background:#e3e6ea"></div>
<div class="a" style="left:1490px;top:888px;width:1px;height:19px;background:#e3e6ea"></div>
<div class="a" style="left:388px;top:893px;width:9px;height:9px;border:1px solid #383838;background:#fff;box-shadow:0 0 0 1px #fff"></div>
<div class="a" style="left:390px;top:897px;width:5px;height:1px;background:#383838"></div>
<div class="a" style="left:392px;top:895px;width:1px;height:5px;background:#383838"></div>
<svg style="left:411px;top:892px" width="7" height="10" viewBox="0 0 7 10"><path d="M1 0L6.5 4.5L1 9Z" fill="#3d9be9"/></svg>
<div class="t" style="left:435px;top:892px;font-size:11px;color:#2b2b2b">28000033</div>
<div class="t" style="left:529px;width:100px;text-align:center;top:892px;font-size:11px;color:#2b2b2b">24/11/2023</div>
<div class="t" style="left:864px;width:100px;text-align:right;top:892px;font-size:11px;color:#2b2b2b">0.00</div>
<div class="t" style="left:954px;width:100px;text-align:right;top:892px;font-size:11px;color:#2b2b2b">0.00</div>
<div class="t" style="left:1044px;width:100px;text-align:right;top:892px;font-size:11px;color:#2b2b2b">0.00</div>
<div class="t" style="left:1155px;top:892px;font-size:11px;letter-spacing:-0.4px;color:#2b2b2b">EUR</div>
<div class="t" style="left:1275px;top:892px;font-size:11px;letter-spacing:0.2px;color:#5e5e5e">Captured</div>
<svg style="left:1380px;top:896px" width="6" height="4" viewBox="0 0 6 4"><path d="M0 0H6L3 4Z" fill="#a9c2d8"/></svg>
<div class="a" style="left:338px;top:908px;width:15px;height:48px;background:#fff"></div>
<div class="a" style="left:353px;top:908px;width:1549px;height:48px;background:#d9dde0;border-left:1px solid #c4c0bc;border-bottom:1px solid #d8d5d2"></div>
<svg style="left:376px;top:927px" width="5" height="9" viewBox="0 0 5 9"><path d="M0.3 0.3L4.3 4.3L0.3 8.3Z" fill="#1a1a28"/></svg>
<div class="t" style="left:385px;top:927.3px;font-size:11px;letter-spacing:0.18px;color:#1c1c2a">Document Type: Warehouse exchange order</div>
<div class="a" style="left:879px;top:908px;width:1px;height:47px;background:#dfdedc"></div>
<div class="a" style="left:969px;top:908px;width:1px;height:47px;background:#dfdedc"></div>
<div class="a" style="left:1490px;top:908px;width:1px;height:47px;background:#dfdedc"></div>
<svg style="left:344px;top:927px" width="5" height="9" viewBox="0 0 5 9"><path d="M0.3 0.3L4.3 4.3L0.3 8.3Z" fill="#1a1a28"/></svg>
<div class="t" style="left:919px;top:935.7px;font-size:11px;color:#555">EUR</div>
<div class="t" style="left:888px;top:918.7px;font-size:11px;letter-spacing:0.4px;color:#555">Net total:</div>
<div class="t" style="left:888px;top:935.7px;font-size:11px;letter-spacing:0.1px;color:#555">0.00</div></body></html>
